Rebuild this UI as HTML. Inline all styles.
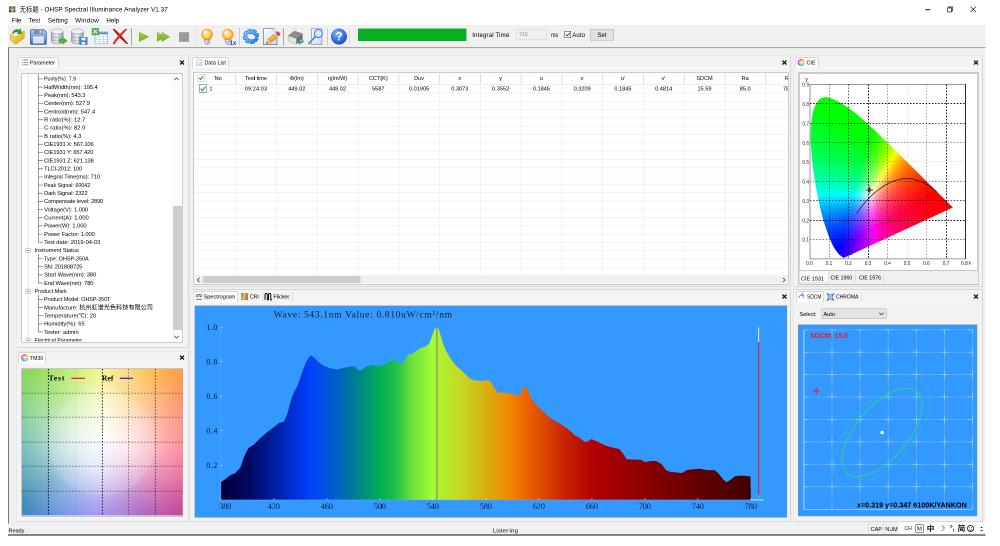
<!DOCTYPE html>
<html lang="en"><head><meta charset="utf-8"><title>OHSP Spectral Illuminance Analyzer V1.37</title>
<style>
html,body{margin:0;padding:0;background:#fff;overflow:hidden}
body{width:1000px;height:546px;position:relative}
#root{position:absolute;left:0;top:0;width:2000px;height:1092px;transform:scale(.5);transform-origin:0 0;will-change:transform;
font-family:"Liberation Sans","Noto Sans CJK SC",sans-serif;overflow:hidden}
#root div,#root span.t,#root svg{position:absolute;box-sizing:border-box}
#root svg{overflow:visible}
span.t{white-space:nowrap}
.mono{font-family:"Liberation Mono","Noto Sans CJK SC",monospace}
.serif{font-family:"Liberation Serif","Noto Serif CJK SC",serif}
.b{font-weight:bold}
</style></head>
<body><div id="root">
<div style="left:16.4px;top:0px;width:1954.8px;height:1070.4px;background:#fff"></div>
<div style="left:16.4px;top:50.8px;width:1954.8px;height:1019.6px;background:#f0f0f0"></div>
<svg style="left:18px;top:12px" width="14" height="14" viewBox="0 0 7 7" >
<rect x="0" y="0.3" width="2" height="2.6" fill="#c33"/><rect x="2.2" y="0.3" width="2" height="2.6" fill="#3a3"/><rect x="4.4" y="0.3" width="2" height="2.6" fill="#36c"/><rect x="0" y="3.4" width="2" height="3" fill="#444"/><rect x="2.2" y="3.4" width="2" height="3" fill="#d90"/><rect x="4.4" y="3.4" width="2" height="3" fill="#555"/></svg>
<span id="t0" class="t" style="top:12.24px;font-size:12.6px;line-height:15.12px;color:#000;left:39.2px;letter-spacing:0.15px;">无标题 - OHSP Spectral Illuminance Analyzer V1.37</span>
<svg style="left:1840px;top:7.2px" width="124" height="22" viewBox="0 0 62 11" >
<path d="M5.2 6.2h5.2" stroke="#000" stroke-width="0.9" fill="none"/><path d="M27.6 4.4h4v4h-4z M28.6 4.4v-1h4v4h-1" stroke="#000" stroke-width="0.6" fill="none"/><path d="M50.6 3.1l5.4 5.4M56 3.1l-5.4 5.4" stroke="#000" stroke-width="0.6" fill="none"/></svg>
<span id="t1" class="t" style="top:33.84px;font-size:12.6px;line-height:15.12px;color:#000;left:23.2px;letter-spacing:-0.22px;">File</span>
<span id="t2" class="t" style="top:33.84px;font-size:12.6px;line-height:15.12px;color:#000;left:57px;letter-spacing:0.02px;">Test</span>
<span id="t3" class="t" style="top:33.84px;font-size:12.6px;line-height:15.12px;color:#000;left:95.6px;letter-spacing:0.11px;">Setting</span>
<span id="t4" class="t" style="top:33.84px;font-size:12.6px;line-height:15.12px;color:#000;left:150.2px;letter-spacing:0.53px;">Window</span>
<span id="t5" class="t" style="top:33.84px;font-size:12.6px;line-height:15.12px;color:#000;left:212.8px;letter-spacing:-0.13px;">Help</span>
<div style="left:16.4px;top:93.6px;width:1954.8px;height:2.4px;background:#a6a6a6"></div>
<div style="left:16.4px;top:96px;width:1954.8px;height:1.2px;background:#e4e4e4"></div>
<div style="left:16.4px;top:95px;width:1.6px;height:952px;background:#7a7a7a"></div>
<div style="left:16.4px;top:50.8px;width:1954.8px;height:1.2px;background:#e2e2e2"></div>
<div style="left:262.2px;top:56.4px;width:1.6px;height:34.8px;background:#a8a8a8"></div>
<div style="left:390.6px;top:56.4px;width:1.6px;height:34.8px;background:#dedede"></div>
<div style="left:477.8px;top:56.4px;width:1.6px;height:34.8px;background:#a8a8a8"></div>
<div style="left:566px;top:56.4px;width:1.6px;height:34.8px;background:#a8a8a8"></div>
<div style="left:653.8px;top:56.4px;width:1.6px;height:34.8px;background:#a8a8a8"></div>
<div style="left:698.4px;top:56.4px;width:1.6px;height:34.8px;background:#dcdcdc"></div>
<svg style="left:0px;top:48px" width="720" height="48" viewBox="0 0 360 24" >
<defs><linearGradient id="gFold" x1="0" y1="0" x2="1" y2="1"><stop offset="0" stop-color="#ffe873"/><stop offset="1" stop-color="#d9a400"/></linearGradient><linearGradient id="gFlop" x1="0" y1="0" x2="0" y2="1"><stop offset="0" stop-color="#a9c8f4"/><stop offset=".6" stop-color="#6a98e4"/><stop offset="1" stop-color="#3a66cc"/></linearGradient><linearGradient id="gDb" x1="0" y1="0" x2="1" y2="0"><stop offset="0" stop-color="#aab4ba"/><stop offset=".45" stop-color="#e9eef0"/><stop offset="1" stop-color="#8e9aa2"/></linearGradient><radialGradient id="gBulb" cx=".45" cy=".45" r=".6"><stop offset="0" stop-color="#fff0c0"/><stop offset=".5" stop-color="#ffd06a"/><stop offset=".85" stop-color="#ff9c14"/><stop offset="1" stop-color="#f48600"/></radialGradient><radialGradient id="gHelp" cx=".4" cy=".3" r=".8"><stop offset="0" stop-color="#8fbcff"/><stop offset=".5" stop-color="#3a7be8"/><stop offset="1" stop-color="#1444b8"/></radialGradient><linearGradient id="gPlay" x1="0" y1="0" x2="0" y2="1"><stop offset="0" stop-color="#a8d64a"/><stop offset="1" stop-color="#6fa51e"/></linearGradient><linearGradient id="gGear" x1="0" y1="0" x2="1" y2="1"><stop offset="0" stop-color="#8ed2ff"/><stop offset=".55" stop-color="#4aa0f8"/><stop offset="1" stop-color="#1c6ce0"/></linearGradient><linearGradient id="gDoc" x1="0" y1="0" x2="1" y2="1"><stop offset="0" stop-color="#ffffff"/><stop offset="1" stop-color="#c9d9f0"/></linearGradient></defs>
<path d="M10.6 10.2l5 3.2 8.6-6.6v7.2l-8.4 6.4-5.2-4.2z" fill="url(#gFold)" stroke="#b8890a" stroke-width=".5"/><path d="M12.3 9.2c1-3.4 4.6-4.6 7.2-3.2l.9-1.4 1.6 4.9-5 .2 1-1.5c-1.700-.8-3.600-.3-4.400 1.600z" fill="#2e9e2e" stroke="#1d7a1d" stroke-width=".3"/>
<path d="M31.4 5.600h12.400l2.600 2.400v11.400a1 1 0 0 1-1 1h-14a1 1 0 0 1-1-1v-12.800a1 1 0 0 1 1-1z" fill="url(#gFlop)" stroke="#2a4fa8" stroke-width=".6"/><rect x="34.200" y="5.400" width="8.200" height="4.600" fill="#8c8c8c"/><rect x="39.600" y="6" width="1.600" height="3.400" fill="#d8d8d8"/><rect x="33" y="12.400" width="10.800" height="7" fill="#e6effb" stroke="#9db8e4" stroke-width=".4"/><path d="M34 15h8.800M34 17.200h8.800" stroke="#b4c8ea" stroke-width=".6"/>
<g transform="translate(51.2 0)"><path d="M0 7.400v9.800c0 1.700 2.700 2.700 6 2.700s6-1 6-2.700v-9.800z" fill="url(#gDb)" stroke="#7f8b92" stroke-width=".5"/><ellipse cx="6" cy="7.400" rx="6" ry="2.500" fill="#eef2f4" stroke="#8b979e" stroke-width=".5"/><path d="M0 10.800c0 1.700 2.700 2.700 6 2.700s6-1 6-2.700M0 14.200c0 1.700 2.700 2.700 6 2.700s6-1 6-2.700" fill="none" stroke="#8b979e" stroke-width=".5"/></g>
<g transform="translate(71.4 0)"><path d="M0 7.400v9.800c0 1.700 2.700 2.700 6 2.700s6-1 6-2.700v-9.800z" fill="url(#gDb)" stroke="#7f8b92" stroke-width=".5"/><ellipse cx="6" cy="7.400" rx="6" ry="2.500" fill="#eef2f4" stroke="#8b979e" stroke-width=".5"/><path d="M0 10.800c0 1.700 2.700 2.700 6 2.700s6-1 6-2.700M0 14.200c0 1.700 2.700 2.700 6 2.700s6-1 6-2.700" fill="none" stroke="#8b979e" stroke-width=".5"/></g>
<path d="M59 15.200h3.800v-1.900l4.400 3.500-4.400 3.500v-1.900h-3.800z" fill="#58b428" stroke="#3a8a14" stroke-width=".4"/>
<rect x="79.600" y="13.400" width="7.600" height="7.200" fill="#3d84d8" stroke="#2460b0" stroke-width=".4"/><rect x="81.200" y="13.600" width="4.400" height="2.800" fill="#e8f0fa"/><rect x="81.600" y="18" width="3.600" height="2.600" fill="#e8f0fa"/>
<rect x="95" y="8" width="12.600" height="11.800" fill="#fff" stroke="#6aa2d8" stroke-width=".6"/><rect x="95" y="8" width="12.600" height="2.400" fill="#5a9ad8"/><path d="M98.600 8.200h1.400M102 8.200h1.400M105 8.200h1.400" stroke="#f2c12e" stroke-width=".8"/><path d="M95 13h12.600M95 15.300h12.600M95 17.600h12.600M99.200 10.400v9.400M103.400 10.400v9.400" stroke="#a8c8ea" stroke-width=".5"/><rect x="92" y="4.200" width="6.600" height="6.800" fill="#55a655" stroke="#3a8a3a" stroke-width=".3"/><path d="M93.400 5.600l3.800 4M97.200 5.600l-3.800 4" stroke="#fff" stroke-width=".9"/>
<path d="M112.800 5.300c.6-.5 1.300-.5 1.900 0 4.600 4 9.400 9 13 14.200-.2.500-.6.700-1.100.500-4.300-3.400-9.700-9-13.800-14.700z" fill="#a81616"/><path d="M127.200 5.600c-.4-.7-1.400-.8-2.100-.3-4.800 3.600-9.200 8.600-12.300 14.100.2.800.9 1.100 1.600.8 3.400-4.900 8-9.900 12.800-14.600z" fill="#d32222"/><path d="M125.600 6.200c-4.200 3.400-8.200 7.600-11.200 12.200" stroke="#ee5a50" stroke-width=".6" fill="none"/>
<path d="M139.200 8.200l9.800 4.600-9.800 4.800z" fill="url(#gPlay)" stroke="#7fb52a" stroke-width=".5"/>
<path d="M157.200 8.200l7.400 4.600-7.400 4.800z" fill="url(#gPlay)" stroke="#7fb52a" stroke-width=".5"/><path d="M161.800 8.200l8 4.600-8 4.800z" fill="url(#gPlay)" stroke="#7fb52a" stroke-width=".5"/>
<rect x="179" y="8.200" width="10.100" height="9.600" fill="#9b9b9b"/>
<g transform="translate(207.1 .6)"><path d="M-2.600 14.400h5.200v3.100l-1.600 2.300h-2l-1.600-2.300z" fill="#a9c8e0" stroke="#5f86a8" stroke-width=".5"/><path d="M-.9 15v3.600" stroke="#e4f0fa" stroke-width=".9"/><path d="M0 4.500a5.500 5.500 0 0 1 5.500 5.500c0 2.300-1.700 3.500-2.600 5.100h-5.800c-.9-1.600-2.600-2.800-2.600-5.100a5.500 5.500 0 0 1 5.500-5.500z" fill="url(#gBulb)" stroke="#f08a0c" stroke-width=".4"/><ellipse cx="-1.800" cy="7.600" rx="1.300" ry="1.800" transform="rotate(25 -1.800 7.600)" fill="#fff" fill-opacity=".75"/></g>
<g transform="translate(227.8 .6)"><path d="M-2.600 14.400h5.200v3.100l-1.600 2.300h-2l-1.600-2.300z" fill="#a9c8e0" stroke="#5f86a8" stroke-width=".5"/><path d="M-.9 15v3.600" stroke="#e4f0fa" stroke-width=".9"/><path d="M0 4.500a5.500 5.500 0 0 1 5.500 5.500c0 2.300-1.700 3.500-2.600 5.100h-5.800c-.9-1.600-2.600-2.800-2.600-5.100a5.500 5.500 0 0 1 5.500-5.500z" fill="url(#gBulb)" stroke="#f08a0c" stroke-width=".4"/><ellipse cx="-1.800" cy="7.600" rx="1.300" ry="1.800" transform="rotate(25 -1.800 7.600)" fill="#fff" fill-opacity=".75"/></g>
<g transform="translate(250.900 12.450) rotate(-12) scale(1 .96)"><path d="M5.48 -2.19L7.7 -1.76L7.7 1.76L5.48 2.19L5.42 2.33L6.69 4.2L4.2 6.69L2.33 5.42L2.19 5.48L1.76 7.7L-1.76 7.7L-2.19 5.48L-2.33 5.42L-4.2 6.69L-6.69 4.2L-5.42 2.33L-5.48 2.19L-7.7 1.76L-7.7 -1.76L-5.48 -2.19L-5.42 -2.33L-6.69 -4.2L-4.2 -6.69L-2.33 -5.42L-2.19 -5.48L-1.76 -7.7L1.76 -7.7L2.19 -5.48L2.33 -5.42L4.2 -6.69L6.69 -4.2L5.42 -2.33Z" fill="url(#gGear)" stroke="#1c6ad8" stroke-width=".5" stroke-linejoin="round"/><ellipse cx=".2" cy=".1" rx="4.300" ry="3" transform="rotate(30)" fill="#eef0f4" stroke="#2a78e4" stroke-width=".6"/></g>
<path d="M263.500 4.700h10.300l3.200 3.200v12.700h-13.500z" fill="url(#gDoc)" stroke="#5f76a6" stroke-width=".7"/><path d="M273.800 4.700v3.200h3.200" fill="#fff" stroke="#7f93b8" stroke-width=".4"/><g transform="translate(266.200 19.500) rotate(-39)"><path d="M0 0l3.400-2.200h8.800v4.400h-8.800z" fill="#f5a21c" stroke="#b4690a" stroke-width=".35"/><path d="M3.400-.7h8.800" stroke="#ffd070" stroke-width=".9"/><path d="M0 0l3.400-2.200v4.400z" fill="#ecd6a8"/><path d="M0 0l1.600-1v2z" fill="#333"/><rect x="12.200" y="-2.200" width="1.700" height="4.400" fill="#c9ccd2"/><path d="M13.900-2.200h1.700a1.400 1.400 0 0 1 1.400 1.400v1.600a1.400 1.400 0 0 1-1.400 1.400h-1.700z" fill="#de3c58"/></g>
<path d="M291.200 8.600l3.800-4.200 1.600.7-2.400 4z" fill="#f2f6ff" stroke="#9aabbf" stroke-width=".3"/><path d="M288.200 11.800l6.400-4.600 8 2.500-6.200 4.900z" fill="#8e8e8e"/><path d="M288.200 11.800l8.200 2.800v5.700l-8.200-3.300z" fill="#e6e6e6" stroke="#8a8a8a" stroke-width=".35"/><path d="M296.400 14.600l6.200-4.900v5.500l-6.200 5.100z" fill="#6e6e6e"/><path d="M288.200 11.800l6.400-4.600 8 2.500" fill="none" stroke="#666" stroke-width=".4"/><path d="M297.400 17.600l4.800-2.600 1.800 2.800-4.600 2.900z" fill="#4a8ae0"/><path d="M296.800 17l2-1 1.200 1.800-2 1z" fill="#30a030"/><path d="M299.800 16.600l1.600-.8.800 1.200-1.600.8z" fill="#f0d030"/>
<path d="M311.400 4.800h10.600v15.600h-10.600z" fill="url(#gDoc)" stroke="#6f86b4" stroke-width=".6"/><circle cx="318.400" cy="9.600" r="4" fill="#dbe8fa" fill-opacity=".8" stroke="#4a86d8" stroke-width="1.100"/><path d="M315.400 12.600l-6.600 7" stroke="#4a86d8" stroke-width="1.600" stroke-linecap="round"/>
<circle cx="339" cy="12.600" r="7.800" fill="url(#gHelp)" stroke="#1a48b0" stroke-width=".4"/>
</svg>
<span id="t6" class="t b" style="top:59.8px;font-size:23px;line-height:27.6px;color:#fff;left:678.2px;transform:translateX(-50%);">?</span>
<span id="t7" class="t b" style="top:78.28px;font-size:13.2px;line-height:15.84px;color:#2a2ac8;left:466.4px;transform:translateX(-50%) scaleX(0.8724);">1x</span>
<div style="left:714.8px;top:55.8px;width:219.6px;height:27.8px;background:#e6e6e6;border:1px solid #fbfbfb"></div>
<div style="left:716.2px;top:57.2px;width:216.8px;height:25px;background:#06b025"></div>
<span id="t8" class="t" style="top:63px;font-size:12px;line-height:14.4px;color:#000;left:944.4px;letter-spacing:0.39px;">Integral Time</span>
<div style="left:1032.4px;top:58.6px;width:60.4px;height:20.6px;background:#f0f0f0;border:1px solid #d0d0d0"></div>
<span id="t9" class="t" style="top:62.28px;font-size:11.2px;line-height:13.44px;color:#8a8a8a;left:1038.4px;transform-origin:0 50%;transform:scaleX(0.9212);">710</span>
<span id="t10" class="t" style="top:63.2px;font-size:12px;line-height:14.4px;color:#000;left:1102px;transform-origin:0 50%;transform:scaleX(0.9125);">ms</span>
<div style="left:1129.2px;top:62.4px;width:13.2px;height:13.2px;background:#fff;border:1px solid #333"></div>
<svg style="left:1129.2px;top:62.4px" width="13.2" height="13.2" viewBox="0 0 6.6 6.6" >
<path d="M1.400 3.400l1.400 1.500 2.600-3.200" stroke="#222" stroke-width=".8" fill="none"/></svg>
<span id="t11" class="t" style="top:63px;font-size:12px;line-height:14.4px;color:#000;left:1144.4px;letter-spacing:0.33px;">Auto</span>
<div style="left:1180px;top:57.6px;width:47.6px;height:23.4px;background:#e1e1e1;border:1px solid #adadad"></div>
<span id="t12" class="t" style="top:62.6px;font-size:12px;line-height:14.4px;color:#000;left:1203.8px;transform:translateX(-50%);">Set</span>
<span id="t13" class="t" style="top:1053.52px;font-size:11.8px;line-height:14.16px;color:#000;left:17.2px;transform-origin:0 50%;transform:scaleX(0.9264);">Ready</span>
<span id="t14" class="t" style="top:1053.92px;font-size:11.8px;line-height:14.16px;color:#000;left:986px;letter-spacing:0.31px;">Listening</span>
<div style="left:16.4px;top:1069px;width:1954.8px;height:2.2px;background:#111"></div>
<div style="left:1736.8px;top:1045.2px;width:1px;height:20.8px;background:#d2d2d2"></div>
<div style="left:1766.8px;top:1045.2px;width:1px;height:20.8px;background:#d2d2d2"></div>
<span id="t15" class="t" style="top:1051.52px;font-size:10.8px;line-height:12.96px;color:#000;left:1741.2px;letter-spacing:0.2px;">CAP</span>
<span id="t16" class="t" style="top:1051.52px;font-size:10.8px;line-height:12.96px;color:#000;left:1770.8px;letter-spacing:-0.06px;">NUM</span>
<div style="left:1797.2px;top:1043.6px;width:174px;height:25.4px;background:#fff"></div>
<span id="t17" class="t" style="top:1050.96px;font-size:10.4px;line-height:12.48px;color:#222;left:1808.8px;transform-origin:0 50%;transform:scaleX(0.9590);">CH</span>
<div style="left:1830.8px;top:1049.2px;width:16px;height:16px;border:1px solid #222;background:#fff"></div>
<span id="t18" class="t serif" style="top:1049.96px;font-size:12.4px;line-height:14.88px;color:#111;left:1838.8px;transform:translateX(-50%);">M</span>
<span id="t19" class="t b" style="top:1048.08px;font-size:15.2px;line-height:18.24px;color:#111;left:1861.2px;transform:translateX(-50%);">中</span>
<span id="t20" class="t" style="top:1047.68px;font-size:15.2px;line-height:18.24px;color:#111;left:1883.2px;transform:translateX(-50%);">☽</span>
<span id="t21" class="t b" style="top:1047.6px;font-size:14px;line-height:16.8px;color:#111;left:1904.4px;transform:translateX(-50%);">°,</span>
<span id="t22" class="t b" style="top:1048.08px;font-size:15.2px;line-height:18.24px;color:#111;left:1922.8px;transform:translateX(-50%);">简</span>
<svg style="left:1933.2px;top:1049.2px" width="16" height="16" viewBox="0 0 8 8" >
<circle cx="4" cy="4" r="3.100" fill="none" stroke="#111" stroke-width=".8"/><circle cx="2.900" cy="3.200" r=".5" fill="#111"/><circle cx="5.100" cy="3.200" r=".5" fill="#111"/><path d="M2.400 5c.9 1 2.300 1 3.200 0" stroke="#111" stroke-width=".6" fill="none"/></svg>
<svg style="left:1959.2px;top:1050px" width="8" height="16" viewBox="0 0 4 8" >
<path d="M.8 3h2.400L2 1.600zM.8 5h2.400L2 6.400z" fill="#111"/></svg>
<div style="left:33px;top:111.4px;width:343.6px;height:585px;background:#f3f3f3;border:1.6px solid #e0e0e0;border-right-color:#bdbdbd;border-bottom-color:#bdbdbd"></div>
<div style="left:34.2px;top:134px;width:341.2px;height:1.8px;background:#fdfdfd"></div>
<div style="left:37px;top:115.2px;width:80px;height:20.8px;background:#fdfdfd;border:1.8px solid #bcbcbc;border-bottom:none;border-radius:2.4px 2.4px 0 0"></div>
<svg style="left:357.6px;top:119px" width="12" height="12" viewBox="0 0 6 6" >
<path d="M1 1.100l4 3.900M5 1.100l-4 3.900" stroke="#111" stroke-width="1.250" fill="none"/></svg>
<svg style="left:43.2px;top:118.4px" width="14" height="14" viewBox="0 0 7 7" >
<path d="M.2 1h1M.2 3.400h1M.2 5.800h1" stroke="#4a90e0" stroke-width="1"/><path d="M2 1h4.600M2 3.400h4.600M2 5.800h4.600" stroke="#888" stroke-width=".9"/></svg>
<span id="t23" class="t" style="top:118.24px;font-size:11.6px;line-height:13.92px;color:#000;left:60.4px;transform-origin:0 50%;transform:scaleX(0.9201);">Parameter</span>
<div style="left:43px;top:146.8px;width:322.4px;height:538px;background:#fff;border:1.4px solid #9a9a9a;border-right-color:#a6a6a6;border-bottom-color:#a0a0a0"></div>
<div style="left:44.4px;top:148.2px;width:297px;height:535.2px;overflow:hidden">
<svg style="left:0px;top:0px" width="300" height="536" viewBox="0 0 150 268" >
<path d="M6.2 0V266.18" stroke="#b8b8b8" stroke-width=".7" stroke-dasharray=".6 .6"/><rect x="4" y="174.18" width="4.400" height="4.400" fill="#fff" stroke="#9a9a9a" stroke-width=".5"/><path d="M5 176.38h2.400" stroke="#333" stroke-width=".6"/><rect x="4" y="215" width="4.400" height="4.400" fill="#fff" stroke="#9a9a9a" stroke-width=".5"/><path d="M5 217.2h2.400" stroke="#333" stroke-width=".6"/><rect x="4" y="263.98" width="4.400" height="4.400" fill="#fff" stroke="#9a9a9a" stroke-width=".5"/><path d="M5 266.18h2.400" stroke="#333" stroke-width=".6"/><path d="M16.3 4.96h4.600M16.3 13.12h4.600M16.3 21.29h4.600M16.3 29.45h4.600M16.3 37.61h4.600M16.3 45.78h4.600M16.3 53.94h4.600M16.3 62.1h4.600M16.3 70.26h4.600M16.3 78.43h4.600M16.3 86.59h4.600M16.3 94.75h4.600M16.3 102.92h4.600M16.3 111.08h4.600M16.3 119.24h4.600M16.3 127.41h4.600M16.3 135.57h4.600M16.3 143.73h4.600M16.3 151.89h4.600M16.3 160.06h4.600M16.3 168.22h4.600M16.3 0V168.22M16.3 184.55h4.600M16.3 192.71h4.600M16.3 200.87h4.600M16.3 209.03h4.600M16.3 179.88V209.03M16.3 225.36h4.600M16.3 233.52h4.600M16.3 241.69h4.600M16.3 249.85h4.600M16.3 258.01h4.600M16.3 220.7V258.01" stroke="#6e6e6e" stroke-width=".7" fill="none"/></svg>
<span id="t24" class="t tr" style="top:3.22px;font-size:11.5px;line-height:13.8px;color:#000;left:43.8px;transform-origin:0 50%;transform:scaleX(0.9215);">Purity(%): 7.9</span>
<span id="t25" class="t tr" style="top:19.55px;font-size:11.5px;line-height:13.8px;color:#000;left:43.8px;letter-spacing:-0.07px;">HalfWidth(nm): 195.4</span>
<span id="t26" class="t tr" style="top:35.87px;font-size:11.5px;line-height:13.8px;color:#000;left:43.8px;letter-spacing:-0.16px;">Peak(nm): 543.3</span>
<span id="t27" class="t tr" style="top:52.2px;font-size:11.5px;line-height:13.8px;color:#000;left:43.8px;letter-spacing:-0.09px;">Center(nm): 527.9</span>
<span id="t28" class="t tr" style="top:68.52px;font-size:11.5px;line-height:13.8px;color:#000;left:43.8px;letter-spacing:-0.01px;">Centroid(nm): 547.4</span>
<span id="t29" class="t tr" style="top:84.85px;font-size:11.5px;line-height:13.8px;color:#000;left:43.8px;letter-spacing:0.13px;">R ratio(%): 12.7</span>
<span id="t30" class="t tr" style="top:101.18px;font-size:11.5px;line-height:13.8px;color:#000;left:43.8px;letter-spacing:0.09px;">G ratio(%): 82.9</span>
<span id="t31" class="t tr" style="top:117.5px;font-size:11.5px;line-height:13.8px;color:#000;left:43.8px;letter-spacing:0.09px;">B ratio(%): 4.3</span>
<span id="t32" class="t tr" style="top:133.83px;font-size:11.5px;line-height:13.8px;color:#000;left:43.8px;letter-spacing:-0.26px;">CIE1931 X: 567.106</span>
<span id="t33" class="t tr" style="top:150.15px;font-size:11.5px;line-height:13.8px;color:#000;left:43.8px;letter-spacing:-0.24px;">CIE1931 Y: 657.420</span>
<span id="t34" class="t tr" style="top:166.48px;font-size:11.5px;line-height:13.8px;color:#000;left:43.8px;letter-spacing:-0.22px;">CIE1931 Z: 621.138</span>
<span id="t35" class="t tr" style="top:182.81px;font-size:11.5px;line-height:13.8px;color:#000;left:43.8px;letter-spacing:-0.29px;">TLCI-2012: 100</span>
<span id="t36" class="t tr" style="top:199.13px;font-size:11.5px;line-height:13.8px;color:#000;left:43.8px;letter-spacing:-0.15px;">Integral Time(ms): 710</span>
<span id="t37" class="t tr" style="top:215.46px;font-size:11.5px;line-height:13.8px;color:#000;left:43.8px;transform-origin:0 50%;transform:scaleX(0.9263);">Peak Signal: 60042</span>
<span id="t38" class="t tr" style="top:231.78px;font-size:11.5px;line-height:13.8px;color:#000;left:43.8px;letter-spacing:-0.27px;">Dark Signal: 2322</span>
<span id="t39" class="t tr" style="top:248.11px;font-size:11.5px;line-height:13.8px;color:#000;left:43.8px;letter-spacing:-0.26px;">Compensate level: 2890</span>
<span id="t40" class="t tr" style="top:264.44px;font-size:11.5px;line-height:13.8px;color:#000;left:43.8px;letter-spacing:-0.05px;">Voltage(V): 1.000</span>
<span id="t41" class="t tr" style="top:280.76px;font-size:11.5px;line-height:13.8px;color:#000;left:43.8px;letter-spacing:0.02px;">Current(A): 1.000</span>
<span id="t42" class="t tr" style="top:297.09px;font-size:11.5px;line-height:13.8px;color:#000;left:43.8px;letter-spacing:-0.09px;">Power(W): 1.000</span>
<span id="t43" class="t tr" style="top:313.41px;font-size:11.5px;line-height:13.8px;color:#000;left:43.8px;letter-spacing:-0.11px;">Power Factor: 1.000</span>
<span id="t44" class="t tr" style="top:329.74px;font-size:11.5px;line-height:13.8px;color:#000;left:43.8px;letter-spacing:0.03px;">Test date: 2019-04-03</span>
<span id="t45" class="t tr" style="top:346.07px;font-size:11.5px;line-height:13.8px;color:#000;left:24.8px;letter-spacing:-0.12px;">Instrument Status</span>
<span id="t46" class="t tr" style="top:362.39px;font-size:11.5px;line-height:13.8px;color:#000;left:43.8px;transform-origin:0 50%;transform:scaleX(0.9428);">Type: OHSP-350A</span>
<span id="t47" class="t tr" style="top:378.72px;font-size:11.5px;line-height:13.8px;color:#000;left:43.8px;letter-spacing:-0.29px;">SN: 201808725</span>
<span id="t48" class="t tr" style="top:395.04px;font-size:11.5px;line-height:13.8px;color:#000;left:43.8px;letter-spacing:-0.07px;">Start Wave(nm): 380</span>
<span id="t49" class="t tr" style="top:411.37px;font-size:11.5px;line-height:13.8px;color:#000;left:43.8px;letter-spacing:-0.19px;">End Wave(nm): 780</span>
<span id="t50" class="t tr" style="top:427.7px;font-size:11.5px;line-height:13.8px;color:#000;left:24.8px;transform-origin:0 50%;transform:scaleX(0.9446);">Product Mark</span>
<span id="t51" class="t tr" style="top:444.02px;font-size:11.5px;line-height:13.8px;color:#000;left:43.8px;transform-origin:0 50%;transform:scaleX(0.9262);">Product Model: OHSP-350T</span>
<span id="t52" class="t tr" style="top:460.35px;font-size:11.5px;line-height:13.8px;color:#000;left:43.8px;letter-spacing:-0.01px;">Manufacture: <span style="font-size:12.3px">杭州虹谱光色科技有限公司</span></span>
<span id="t53" class="t tr" style="top:476.67px;font-size:11.5px;line-height:13.8px;color:#000;left:43.8px;letter-spacing:0.08px;">Temperature(℃): 20</span>
<span id="t54" class="t tr" style="top:493px;font-size:11.5px;line-height:13.8px;color:#000;left:43.8px;letter-spacing:-0.05px;">Humidity(%): 65</span>
<span id="t55" class="t tr" style="top:509.33px;font-size:11.5px;line-height:13.8px;color:#000;left:43.8px;letter-spacing:0.01px;">Tester: admin</span>
<span id="t56" class="t tr" style="top:525.65px;font-size:11.5px;line-height:13.8px;color:#000;left:24.8px;transform-origin:0 50%;transform:scaleX(0.9175);">Electrical Parameter</span>
</div>
<div style="left:342.4px;top:148.2px;width:21.6px;height:535.2px;background:#fbfbfb"></div>
<div style="left:345.8px;top:412.4px;width:18.2px;height:247.6px;background:#cdcdcd"></div>
<svg style="left:346.8px;top:153.2px" width="12" height="10" viewBox="0 0 6 5" >
<path d="M.8 3.700l2.200-2.400 2.200 2.400" stroke="#555" stroke-width=".8" fill="none"/></svg>
<svg style="left:346.8px;top:668.8px" width="12" height="10" viewBox="0 0 6 5" >
<path d="M.8 1.300l2.200 2.400 2.200-2.400" stroke="#555" stroke-width=".8" fill="none"/></svg>
<div style="left:33px;top:702px;width:343.6px;height:342.4px;background:#f3f3f3;border:1.6px solid #e0e0e0;border-right-color:#bdbdbd;border-bottom-color:#bdbdbd"></div>
<div style="left:34.2px;top:724.6px;width:341.2px;height:1.8px;background:#fdfdfd"></div>
<div style="left:37px;top:704.8px;width:54.2px;height:22px;background:#fdfdfd;border:1.8px solid #bcbcbc;border-bottom:none;border-radius:2.4px 2.4px 0 0"></div>
<svg style="left:357.6px;top:709.2px" width="12" height="12" viewBox="0 0 6 6" >
<path d="M1 1.100l4 3.900M5 1.100l-4 3.900" stroke="#111" stroke-width="1.250" fill="none"/></svg>
<div style="left:41.8px;top:707.8px;width:14.8px;height:14.8px;border-radius:50%;background:radial-gradient(circle,#fff 0,rgba(255,255,255,0) 70%),conic-gradient(#ff4040,#ffb020,#e8e820,#40d040,#20d0d0,#4060ff,#c040ff,#ff40a0,#ff4040)"></div>
<span id="t57" class="t" style="top:708.64px;font-size:11.6px;line-height:13.92px;color:#000;left:60px;transform-origin:0 50%;transform:scaleX(0.8907);">TM30</span>
<div style="left:42.8px;top:736.8px;width:323.6px;height:296px;background:#fff;border:1.4px solid #9a9a9a;border-right-color:#a6a6a6;border-bottom-color:#a0a0a0"></div>
<div style="left:44.2px;top:738.4px;width:320.6px;height:292.6px;background:radial-gradient(circle 107px at 50% 50%,rgba(255,255,255,.13) 0,rgba(255,255,255,.13) 99%,rgba(255,255,255,0) 100%),radial-gradient(ellipse 66% 66% at 50% 50%,rgba(255,255,255,1) 0,rgba(255,255,255,.80) 28%,rgba(255,255,255,.36) 62%,rgba(255,255,255,0) 100%),conic-gradient(from 0deg at 50% 50%,#f6f070 0deg,#ffb040 38deg,#ff8a58 62deg,#ff6f80 95deg,#d04c98 128deg,#a050b8 150deg,#8878ee 185deg,#5088d8 215deg,#3c8cb4 235deg,#58b0a0 268deg,#78cc78 295deg,#90dc54 318deg,#c4ec60 342deg,#f6f070 360deg)"></div>
<svg style="left:44.2px;top:738.4px" width="320.6" height="292.6" viewBox="0 0 160.3 146.3" >
<path d="M26.4 0V146.3" stroke="#000" stroke-opacity=".9" stroke-width="1" stroke-dasharray="1.560 1.565"/><path d="M53.4 0V146.3" stroke="#000" stroke-opacity=".1" stroke-width="1" stroke-dasharray="1.560 1.565"/><path d="M80.4 0V146.3" stroke="#000" stroke-opacity=".85" stroke-width="1" stroke-dasharray="1.560 1.565"/><path d="M106.4 0V146.3" stroke="#000" stroke-opacity=".45" stroke-width="1" stroke-dasharray="1.560 1.565"/><path d="M133.4 0V146.3" stroke="#000" stroke-opacity=".6" stroke-width="1" stroke-dasharray="1.560 1.565"/><path d="M0 24.3H160.3" stroke="#000" stroke-opacity=".4" stroke-width="1" stroke-dasharray="1.560 1.565"/><path d="M0 48.3H160.3" stroke="#000" stroke-opacity=".4" stroke-width="1" stroke-dasharray="1.560 1.565"/><path d="M0 73.3H160.3" stroke="#000" stroke-opacity=".4" stroke-width="1" stroke-dasharray="1.560 1.565"/><path d="M0 97.3H160.3" stroke="#000" stroke-opacity=".4" stroke-width="1" stroke-dasharray="1.560 1.565"/><path d="M0 122.3H160.3" stroke="#000" stroke-opacity=".4" stroke-width="1" stroke-dasharray="1.560 1.565"/><path d="M49.3 9.3H62.9" stroke="#ff2410" stroke-width="1.300"/><path d="M97.9 9.3H110.9" stroke="#2c2cf8" stroke-width="1.300"/></svg>
<span id="t58" class="t serif b" style="top:746.68px;font-size:15.2px;line-height:18.24px;color:#000;left:97.2px;letter-spacing:1.69px;">Test</span>
<span id="t59" class="t serif b" style="top:746.68px;font-size:15.2px;line-height:18.24px;color:#000;left:203.8px;letter-spacing:0.14px;">Ref</span>
<div style="left:381.2px;top:111.4px;width:1199.6px;height:463px;background:#f3f3f3;border:1.6px solid #e0e0e0;border-right-color:#bdbdbd;border-bottom-color:#bdbdbd"></div>
<div style="left:382.4px;top:134px;width:1197.2px;height:1.8px;background:#fdfdfd"></div>
<div style="left:385.2px;top:115.2px;width:72px;height:20.8px;background:#fdfdfd;border:1.8px solid #bcbcbc;border-bottom:none;border-radius:2.4px 2.4px 0 0"></div>
<svg style="left:1563.2px;top:119px" width="12" height="12" viewBox="0 0 6 6" >
<path d="M1 1.100l4 3.900M5 1.100l-4 3.900" stroke="#111" stroke-width="1.250" fill="none"/></svg>
<div style="left:392.4px;top:118.6px;width:12.8px;height:13.2px;background:linear-gradient(135deg,#fff,#c8d4ee);border:0.8px solid #b4c0dc"></div>
<span id="t60" class="t" style="top:118.24px;font-size:11.6px;line-height:13.92px;color:#000;left:408.8px;transform-origin:0 50%;transform:scaleX(0.9352);">Data List</span>
<div style="left:387.2px;top:144px;width:1190px;height:424.8px;background:#fff;border:1.4px solid #9a9a9a;border-right-color:#a6a6a6;border-bottom-color:#a0a0a0"></div>
<div style="left:388.6px;top:145.4px;width:1187.2px;height:422px;overflow:hidden">
<div style="left:0px;top:0px;width:1187.2px;height:24.4px;background:#fff"></div>
<svg style="left:0px;top:0px" width="1187.2" height="422" viewBox="0 0 593.6 211" >
<path d="M41.3 1.200V10.8M82.07 1.200V10.8M122.84 1.200V10.8M163.61 1.200V10.8M204.38 1.200V10.8M245.15 1.200V10.8M285.92 1.200V10.8M326.69 1.200V10.8M367.46 1.200V10.8M408.23 1.200V10.8M449 1.200V10.8M489.77 1.200V10.8M530.54 1.200V10.8M571.31 1.200V10.8M612.08 1.200V10.8" stroke="#d4d4d4" stroke-width=".8" fill="none"/><path d="M41.3 12.2V202M82.07 12.2V202M122.84 12.2V202M163.61 12.2V202M204.38 12.2V202M245.15 12.2V202M285.92 12.2V202M326.69 12.2V202M367.46 12.2V202M408.23 12.2V202M449 12.2V202M489.77 12.2V202M530.54 12.2V202M571.31 12.2V202M612.08 12.2V202" stroke="#efefef" stroke-width=".7" fill="none"/><path d="M0 20.5H593.6M0 28.8H593.6M0 37.1H593.6M0 45.4H593.6M0 53.7H593.6M0 62H593.6M0 70.3H593.6M0 78.6H593.6M0 86.9H593.6M0 95.2H593.6M0 103.5H593.6M0 111.8H593.6M0 120.1H593.6M0 128.4H593.6M0 136.7H593.6M0 145H593.6M0 153.3H593.6M0 161.6H593.6M0 169.9H593.6M0 178.2H593.6M0 186.5H593.6M0 194.8H593.6M0 203.1H593.6" stroke="#efefef" stroke-width=".7" fill="none"/><path d="M0 12.2H593.6" stroke="#e6e6e6" stroke-width=".7"/></svg>
<span id="t61" class="t" style="top:4.48px;font-size:11.2px;line-height:13.44px;color:#000;left:47.8px;transform:translateX(-50%);">No</span>
<span id="t62" class="t" style="top:26.08px;font-size:11.2px;line-height:13.44px;color:#000;left:30.2px;">1</span>
<span id="t63" class="t" style="top:4.48px;font-size:11.2px;line-height:13.44px;color:#000;left:123.37px;transform:translateX(-50%);letter-spacing:-0.09px;">Test time</span>
<span id="t64" class="t" style="top:26.08px;font-size:11.2px;line-height:13.44px;color:#000;left:123.37px;transform:translateX(-50%);letter-spacing:0.15px;">09:24:03</span>
<span id="t65" class="t" style="top:4.48px;font-size:11.2px;line-height:13.44px;color:#000;left:204.91px;transform:translateX(-50%);">Φ(lm)</span>
<span id="t66" class="t" style="top:26.08px;font-size:11.2px;line-height:13.44px;color:#000;left:204.91px;transform:translateX(-50%);">449.02</span>
<span id="t67" class="t" style="top:4.48px;font-size:11.2px;line-height:13.44px;color:#000;left:286.45px;transform:translateX(-50%);">η(lm/W)</span>
<span id="t68" class="t" style="top:26.08px;font-size:11.2px;line-height:13.44px;color:#000;left:286.45px;transform:translateX(-50%);">449.02</span>
<span id="t69" class="t" style="top:4.48px;font-size:11.2px;line-height:13.44px;color:#000;left:367.99px;transform:translateX(-50%);">CCT(K)</span>
<span id="t70" class="t" style="top:26.08px;font-size:11.2px;line-height:13.44px;color:#000;left:367.99px;transform:translateX(-50%);">5587</span>
<span id="t71" class="t" style="top:4.48px;font-size:11.2px;line-height:13.44px;color:#000;left:449.53px;transform:translateX(-50%);">Duv</span>
<span id="t72" class="t" style="top:26.08px;font-size:11.2px;line-height:13.44px;color:#000;left:449.53px;transform:translateX(-50%);">0.01905</span>
<span id="t73" class="t" style="top:4.48px;font-size:11.2px;line-height:13.44px;color:#000;left:531.07px;transform:translateX(-50%);">x</span>
<span id="t74" class="t" style="top:26.08px;font-size:11.2px;line-height:13.44px;color:#000;left:531.07px;transform:translateX(-50%);">0.3073</span>
<span id="t75" class="t" style="top:4.48px;font-size:11.2px;line-height:13.44px;color:#000;left:612.61px;transform:translateX(-50%);">y</span>
<span id="t76" class="t" style="top:26.08px;font-size:11.2px;line-height:13.44px;color:#000;left:612.61px;transform:translateX(-50%);">0.3552</span>
<span id="t77" class="t" style="top:4.48px;font-size:11.2px;line-height:13.44px;color:#000;left:694.15px;transform:translateX(-50%);">u</span>
<span id="t78" class="t" style="top:26.08px;font-size:11.2px;line-height:13.44px;color:#000;left:694.15px;transform:translateX(-50%);">0.1845</span>
<span id="t79" class="t" style="top:4.48px;font-size:11.2px;line-height:13.44px;color:#000;left:775.69px;transform:translateX(-50%);">v</span>
<span id="t80" class="t" style="top:26.08px;font-size:11.2px;line-height:13.44px;color:#000;left:775.69px;transform:translateX(-50%);">0.3209</span>
<span id="t81" class="t" style="top:4.48px;font-size:11.2px;line-height:13.44px;color:#000;left:857.23px;transform:translateX(-50%);">u'</span>
<span id="t82" class="t" style="top:26.08px;font-size:11.2px;line-height:13.44px;color:#000;left:857.23px;transform:translateX(-50%);">0.1845</span>
<span id="t83" class="t" style="top:4.48px;font-size:11.2px;line-height:13.44px;color:#000;left:938.77px;transform:translateX(-50%);">v'</span>
<span id="t84" class="t" style="top:26.08px;font-size:11.2px;line-height:13.44px;color:#000;left:938.77px;transform:translateX(-50%);">0.4814</span>
<span id="t85" class="t" style="top:4.48px;font-size:11.2px;line-height:13.44px;color:#000;left:1020.31px;transform:translateX(-50%);">SDCM</span>
<span id="t86" class="t" style="top:26.08px;font-size:11.2px;line-height:13.44px;color:#000;left:1020.31px;transform:translateX(-50%);">15.59</span>
<span id="t87" class="t" style="top:4.48px;font-size:11.2px;line-height:13.44px;color:#000;left:1101.85px;transform:translateX(-50%);">Ra</span>
<span id="t88" class="t" style="top:26.08px;font-size:11.2px;line-height:13.44px;color:#000;left:1101.85px;transform:translateX(-50%);">85.0</span>
<span id="t89" class="t" style="top:4.48px;font-size:11.2px;line-height:13.44px;color:#000;left:1188.19px;transform:translateX(-50%);">R1</span>
<span id="t90" class="t" style="top:26.08px;font-size:11.2px;line-height:13.44px;color:#000;left:1188.19px;transform:translateX(-50%);">78.3</span>
<div style="left:6.8px;top:3px;width:14.8px;height:14.8px;background:#fff;border:1.2px solid #b4c0d0"></div>
<svg style="left:6.8px;top:3px" width="14.8" height="14.8" viewBox="0 0 7.4 7.4" >
<path d="M1.63 3.7l1.48 1.78 2.66 -3.4" stroke="#2a9a2a" stroke-width="1.100" fill="none"/></svg>
<div style="left:9.2px;top:23.6px;width:16.4px;height:16.4px;background:#fff;border:1.8px solid #2a5a9a"></div>
<svg style="left:9.2px;top:23.6px" width="16.4" height="16.4" viewBox="0 0 8.2 8.2" >
<path d="M1.8 4.1l1.64 1.97 2.95 -3.77" stroke="#2a9a2a" stroke-width="1.100" fill="none"/></svg>
<div style="left:0px;top:405.6px;width:1187.2px;height:16.4px;background:#f0f0f0"></div>
<div style="left:17.8px;top:407px;width:314.8px;height:13.8px;background:#cdcdcd"></div>
<svg style="left:3.8px;top:408.6px" width="10" height="12" viewBox="0 0 5 6" >
<path d="M3.600.800l-2.200 2.200 2.200 2.200" stroke="#444" stroke-width=".8" fill="none"/></svg>
<svg style="left:1174.6px;top:408.6px" width="10" height="12" viewBox="0 0 5 6" >
<path d="M1.400.800l2.200 2.200-2.200 2.200" stroke="#444" stroke-width=".8" fill="none"/></svg>
</div>
<div style="left:381.2px;top:579.2px;width:1199.6px;height:465.2px;background:#f3f3f3;border:1.6px solid #e0e0e0;border-top-color:#bcbcbc;border-right-color:#bdbdbd;border-bottom-color:#bdbdbd"></div>
<div style="left:382.4px;top:603.6px;width:1197.2px;height:1.8px;background:#fdfdfd"></div>
<div style="left:386px;top:582.6px;width:90.4px;height:22.6px;background:#fdfdfd;border:1.8px solid #bcbcbc;border-bottom:none;border-radius:2.4px 2.4px 0 0"></div>
<div style="left:523.8px;top:585px;width:1.2px;height:17px;background:#cfcfcf"></div>
<div style="left:584.2px;top:585px;width:1.2px;height:17px;background:#cfcfcf"></div>
<svg style="left:1563.2px;top:587px" width="12" height="12" viewBox="0 0 6 6" >
<path d="M1 1.100l4 3.900M5 1.100l-4 3.900" stroke="#111" stroke-width="1.250" fill="none"/></svg>
<svg style="left:390.8px;top:586.4px" width="14" height="14" viewBox="0 0 7 7" >
<path d="M.5 4c.8-3.600 5.200-3.600 6 0" stroke="#d03030" stroke-width=".9" fill="none"/><path d="M1.700 4.400c.5-2 3.100-2 3.600 0" stroke="#3060d0" stroke-width=".8" fill="none"/><path d="M.6 6.400h5.800" stroke="#30a040" stroke-width="1"/></svg>
<span id="t91" class="t" style="top:586.56px;font-size:11.4px;line-height:13.68px;color:#000;left:407.2px;letter-spacing:-0.18px;">Spectrogram</span>
<div style="left:481.6px;top:586px;width:14.4px;height:14.4px;background:linear-gradient(100deg,#6a6 0,#dc4 45%,#e83 70%,#c33 100%);border:0.6px solid #998"></div>
<span id="t92" class="t" style="top:586.56px;font-size:11.4px;line-height:13.68px;color:#000;left:500px;transform-origin:0 50%;transform:scaleX(0.8968);">CRI</span>
<svg style="left:528.8px;top:585.2px" width="16" height="16" viewBox="0 0 8 8" >
<path d="M.5 7.400V2.600c0-2.400 2.300-2.400 2.300 0v4.800M2.800 7.400c0 0 1.200 0 1.200 0M4 7.400V2.600c0-2.400 2.300-2.400 2.300 0v4.800h1.200" stroke="#000" stroke-width=".95" fill="none"/></svg>
<span id="t93" class="t" style="top:586.56px;font-size:11.4px;line-height:13.68px;color:#000;left:546.8px;letter-spacing:-0.28px;">Flicker</span>
<div style="left:388.6px;top:611.4px;width:1186.8px;height:424.4px;background:#3399ff;border:1.4px solid #9a9a9a;border-right-color:#e4e4e4;border-bottom-color:#e4e4e4"></div>
<svg style="left:390px;top:612.8px" width="1184" height="421.6" viewBox="0 0 592 210.8" >
<defs><linearGradient id="gSpec" gradientUnits="userSpaceOnUse" x1="25.9" y1="0" x2="555.9" y2="0"><stop offset="0" stop-color="#020038"/><stop offset="0.05" stop-color="#02085e"/><stop offset="0.1" stop-color="#021ea0"/><stop offset="0.15" stop-color="#0236e6"/><stop offset="0.17" stop-color="#0242fc"/><stop offset="0.2" stop-color="#0252e0"/><stop offset="0.25" stop-color="#017a98"/><stop offset="0.3" stop-color="#02ae52"/><stop offset="0.33" stop-color="#20c048"/><stop offset="0.36" stop-color="#6ee03c"/><stop offset="0.4" stop-color="#a4fc34"/><stop offset="0.42" stop-color="#b6ee2c"/><stop offset="0.46" stop-color="#cad420"/><stop offset="0.5" stop-color="#d8b010"/><stop offset="0.55" stop-color="#f48200"/><stop offset="0.57" stop-color="#ee6a00"/><stop offset="0.61" stop-color="#dc4800"/><stop offset="0.65" stop-color="#c82200"/><stop offset="0.7" stop-color="#b20200"/><stop offset="0.8" stop-color="#8c0000"/><stop offset="0.9" stop-color="#640000"/><stop offset="1" stop-color="#420000"/></linearGradient></defs><path d="M25.9 193.2L26.18 175.49L30.24 172.78L35.32 168.72L40.4 166.68L45.48 160.93L48.87 150.77L53.27 141.62L59.03 137.9L65.8 131.12L72.58 125.36L79.35 120.28L84.43 116.22L88.83 115.2L92.22 107.75L95.61 94.88L98.99 85.74L102.38 79.64L106.44 67.79L110.85 55.94L115.59 48.82L118.98 50.85L123.38 55.6L128.46 58.98L135.23 61.69L142.01 63.05L148.78 61.35L155.55 60L159.62 60L164.02 64.06L166.73 63.72L171.47 60L176.89 58.64L182.65 59.32L186.71 59.32L192.81 55.94L197.89 53.56L201.27 54.92L195 54.24L199.06 53.23L203.47 55.94L206.85 57.63L210.24 52.55L213.63 47.47L217.01 47.47L221.42 44.08L225.48 41.71L230.56 40.02L233.95 37.31L236.66 30.53L239.03 23.76L241.06 21.05L243.09 21.05L245.12 27.15L247.5 35.61L250.88 44.08L255.96 52.55L261.04 59.32L267.82 65.08L274.59 71.85L279.67 73.89L286.44 74.56L293.22 73.55L295.93 75.24L299.31 81.34L302.7 86.42L308.46 86.08L313.54 86.76L320.31 88.11L324.71 88.79L327.76 83.03L330.47 79.64L332.84 83.03L335.55 90.82L340.63 97.59L347.41 104.37L355.87 111.82L364.34 116.9L371.11 121.3L376.19 125.36L380.6 129.77L375 123.42L379.39 128.91L384.15 130.74L388.91 135.13L392.57 135.13L396.23 132.57L402.45 135.13L409.78 138.79L417.1 140.99L424.42 142.45L428.08 147.21L431.74 152.7L439.06 153.07L446.38 153.43L450.04 155.63L455.53 154.53L461.02 154.53L466.51 157.46L470.91 163.68L475.67 165.51L481.16 165.88L486.65 166.61L492.14 163.32L499.46 162.59L504.95 162.22L512.27 163.68L519.59 163.68L523.25 166.61L528.01 172.83L531.67 175.76L536.06 172.83L540.46 169.54L547.05 169.17L555.47 169.91L555.9 193.2Z" fill="url(#gSpec)"/><path d="M25.9 20.6V193.4H568.4" stroke="#b8dcff" stroke-width=".6" fill="none" stroke-opacity=".28"/><path d="M25.7 158.7h1.600M25.7 124.2h1.600M25.7 89.7h1.600M25.7 55.2h1.600M25.7 20.7h1.600M25.9 193.2v-1.500M78.9 193.2v-1.500M131.9 193.2v-1.500M184.9 193.2v-1.500M237.9 193.2v-1.500M290.9 193.2v-1.500M343.9 193.2v-1.500M396.9 193.2v-1.500M449.9 193.2v-1.500M502.9 193.2v-1.500M555.9 193.2v-1.500" stroke="#d8ecff" stroke-width=".7" fill="none"/><path d="M241.9 21V193.2" stroke="#808080" stroke-width="1.100"/><path d="M555.9 193.4H568.4" stroke="#f4f8ff" stroke-width=".8"/><path d="M563.6 20.9V35.6" stroke="#d6e8fa" stroke-width="1.100"/><path d="M563.6 35.6V188.6" stroke="#d42a44" stroke-width="1.300"/><path d="M563.6 188.6V193.2" stroke="#20e060" stroke-width="1.300"/></svg>
<span id="t94" class="t serif" style="top:617.28px;font-size:19.2px;line-height:23.04px;color:#10203a;left:547.2px;letter-spacing:1.25px;">Wave: 543.1nm Value: 0.810uW/cm²/nm</span>
<span id="t95" class="t serif" style="top:921px;font-size:16px;line-height:19.2px;color:#0a1a30;left:412.8px;letter-spacing:0.93px;">0.2</span>
<span id="t96" class="t serif" style="top:852px;font-size:16px;line-height:19.2px;color:#0a1a30;left:412.8px;letter-spacing:0.93px;">0.4</span>
<span id="t97" class="t serif" style="top:783px;font-size:16px;line-height:19.2px;color:#0a1a30;left:412.8px;letter-spacing:0.93px;">0.6</span>
<span id="t98" class="t serif" style="top:714px;font-size:16px;line-height:19.2px;color:#0a1a30;left:412.8px;letter-spacing:0.93px;">0.8</span>
<span id="t99" class="t serif" style="top:645px;font-size:16px;line-height:19.2px;color:#0a1a30;left:412.8px;letter-spacing:0.93px;">1.0</span>
<span id="t100" class="t serif" style="top:1003.2px;font-size:16px;line-height:19.2px;color:#0a1a30;left:450.6px;transform:translateX(-50%);letter-spacing:0px;">380</span>
<span id="t101" class="t serif" style="top:1003.2px;font-size:16px;line-height:19.2px;color:#0a1a30;left:547.8px;transform:translateX(-50%);letter-spacing:0px;">420</span>
<span id="t102" class="t serif" style="top:1003.2px;font-size:16px;line-height:19.2px;color:#0a1a30;left:653.8px;transform:translateX(-50%);letter-spacing:0px;">460</span>
<span id="t103" class="t serif" style="top:1003.2px;font-size:16px;line-height:19.2px;color:#0a1a30;left:759.8px;transform:translateX(-50%);letter-spacing:0px;">500</span>
<span id="t104" class="t serif" style="top:1003.2px;font-size:16px;line-height:19.2px;color:#0a1a30;left:865.8px;transform:translateX(-50%);letter-spacing:0px;">540</span>
<span id="t105" class="t serif" style="top:1003.2px;font-size:16px;line-height:19.2px;color:#0a1a30;left:971.8px;transform:translateX(-50%);letter-spacing:0px;">580</span>
<span id="t106" class="t serif" style="top:1003.2px;font-size:16px;line-height:19.2px;color:#0a1a30;left:1077.8px;transform:translateX(-50%);letter-spacing:0px;">620</span>
<span id="t107" class="t serif" style="top:1003.2px;font-size:16px;line-height:19.2px;color:#0a1a30;left:1183.8px;transform:translateX(-50%);letter-spacing:0px;">660</span>
<span id="t108" class="t serif" style="top:1003.2px;font-size:16px;line-height:19.2px;color:#0a1a30;left:1289.8px;transform:translateX(-50%);letter-spacing:0px;">700</span>
<span id="t109" class="t serif" style="top:1003.2px;font-size:16px;line-height:19.2px;color:#0a1a30;left:1395.8px;transform:translateX(-50%);letter-spacing:0px;">740</span>
<span id="t110" class="t serif" style="top:1003.2px;font-size:16px;line-height:19.2px;color:#0a1a30;left:1501.8px;transform:translateX(-50%);letter-spacing:0px;">780</span>
<div style="left:1586.6px;top:111.4px;width:379.4px;height:463px;background:#f3f3f3;border:1.6px solid #e0e0e0;border-right-color:#bdbdbd;border-bottom-color:#bdbdbd"></div>
<div style="left:1587.8px;top:134px;width:377px;height:1.8px;background:#fdfdfd"></div>
<div style="left:1590px;top:115.2px;width:47.2px;height:20.8px;background:#fdfdfd;border:1.8px solid #bcbcbc;border-bottom:none;border-radius:2.4px 2.4px 0 0"></div>
<svg style="left:1946.4px;top:119px" width="12" height="12" viewBox="0 0 6 6" >
<path d="M1 1.100l4 3.900M5 1.100l-4 3.900" stroke="#111" stroke-width="1.250" fill="none"/></svg>
<div style="left:1595.4px;top:117.6px;width:14.8px;height:14.8px;border-radius:50%;background:radial-gradient(circle,#fff 0,rgba(255,255,255,0) 70%),conic-gradient(#ff4040,#ffb020,#e8e820,#40d040,#20d0d0,#4060ff,#c040ff,#ff40a0,#ff4040)"></div>
<span id="t111" class="t" style="top:118.44px;font-size:11.6px;line-height:13.92px;color:#000;left:1613.2px;transform-origin:0 50%;transform:scaleX(0.9313);">CIE</span>
<div style="left:1597.2px;top:145px;width:360.8px;height:424.2px;background:#f0f0f0;border:1.6px solid #999;border-right-color:#b0b0b0;border-bottom-color:#8c8c8c"></div>
<div style="left:1599.2px;top:147px;width:355.6px;height:395.2px;background:#fff;border:1.4px solid #b0b0b0;border-bottom-color:#8a8a8a"></div>
<div style="left:1598.4px;top:543.2px;width:58.8px;height:23.2px;background:#fdfdfd;border:1px solid #d0d0d0;border-top:none"></div>
<div style="left:1710.8px;top:546.8px;width:1px;height:17.2px;background:#c4c4c4"></div>
<div style="left:1767.2px;top:546.8px;width:1px;height:17.2px;background:#c4c4c4"></div>
<span id="t112" class="t" style="top:549.52px;font-size:11.8px;line-height:14.16px;color:#000;left:1602.4px;transform-origin:0 50%;transform:scaleX(0.9352);">CIE 1931</span>
<span id="t113" class="t" style="top:547.92px;font-size:11.8px;line-height:14.16px;color:#000;left:1660.8px;transform-origin:0 50%;transform:scaleX(0.8783);">CIE 1960</span>
<span id="t114" class="t" style="top:547.92px;font-size:11.8px;line-height:14.16px;color:#000;left:1718.4px;transform-origin:0 50%;transform:scaleX(0.8945);">CIE 1976</span>
<svg style="left:0px;top:0px" width="2000" height="1092" viewBox="0 0 1000 546" >
<defs><clipPath id="cLoc"><path d="M843.84 257.93L843.81 257.94L843.76 257.96L843.69 257.97L843.58 257.97L843.46 257.96L843.32 257.91L843.18 257.83L843.03 257.72L842.83 257.56L842.59 257.36L842.31 257.1L841.96 256.79L841.53 256.42L841.04 256L840.44 255.47L839.74 254.88L838.95 254.19L837.99 253.14L836.77 251.56L835.39 249.64L834.12 247.69L833.13 245.95L832.26 244.19L831.3 242.07L830.2 239.51L829.02 236.58L827.75 233.17L826.35 229.28L824.86 224.92L823.35 219.99L821.84 214.44L820.32 208.32L818.82 201.7L817.34 194.49L815.88 186.77L814.57 178.88L813.4 170.81L812.38 162.56L811.59 154.51L811.05 146.7L810.75 139.1L810.76 131.94L811.09 125.23L811.73 118.98L812.7 113.44L814.03 108.68L815.68 104.64L817.56 101.46L819.67 99.27L822.01 97.93L824.44 97.24L826.96 97.21L829.57 97.82L832.2 98.71L834.83 99.81L837.47 101.18L840.07 102.64L842.59 104.14L845.06 105.71L847.49 107.36L849.9 109.06L852.27 110.82L854.63 112.65L856.98 114.54L859.33 116.48L861.66 118.47L863.99 120.5L866.31 122.57L868.62 124.67L870.94 126.8L873.25 128.96L875.56 131.15L877.88 133.35L880.2 135.58L882.52 137.82L884.83 140.06L887.14 142.32L889.44 144.58L891.74 146.84L894.04 149.1L896.32 151.35L898.59 153.59L900.84 155.83L903.07 158.04L905.27 160.23L907.46 162.41L909.62 164.55L911.74 166.67L913.84 168.75L915.9 170.8L917.91 172.8L919.89 174.75L921.8 176.65L923.66 178.51L925.47 180.3L927.19 182.02L928.82 183.65L930.38 185.19L931.87 186.68L933.31 188.11L934.69 189.48L935.99 190.77L937.13 191.89L938.18 192.92L939.41 194.14L941.03 195.75L942.82 197.54L944.41 199.12L945.64 200.35L946.68 201.37L947.6 202.28L948.42 203.11L949.13 203.82L949.76 204.44L950.29 204.96L950.74 205.4L951.12 205.77L951.41 206.07L951.65 206.3L951.89 206.55L952.22 206.88L952.57 207.22L952.81 207.46Z"/></clipPath><filter id="fB" x="-5%" y="-5%" width="110%" height="110%"><feGaussianBlur stdDeviation="1.300"/></filter></defs><style>#cm rect{width:3.3px;height:3.3px}</style><g clip-path="url(#cLoc)"><g id="cm" filter="url(#fB)" shape-rendering="crispEdges"><g transform="translate(0 91.09)"><rect x="816" fill="#00ff00"/><rect x="819" fill="#00ff00"/><rect x="822" fill="#00ff00"/><rect x="825" fill="#00ff00"/><rect x="828" fill="#00ff00"/><rect x="831" fill="#00ff00"/><rect x="834" fill="#00ff00"/></g><g transform="translate(0 94.09)"><rect x="810" fill="#00ff00"/><rect x="813" fill="#00ff00"/><rect x="816" fill="#00ff00"/><rect x="819" fill="#00ff00"/><rect x="822" fill="#00ff00"/><rect x="825" fill="#00ff00"/><rect x="828" fill="#00ff00"/><rect x="831" fill="#00ff00"/><rect x="834" fill="#00ff00"/><rect x="837" fill="#00ff00"/><rect x="840" fill="#00ff00"/></g><g transform="translate(0 97.09)"><rect x="810" fill="#00ff01"/><rect x="813" fill="#00ff00"/><rect x="816" fill="#00ff00"/><rect x="819" fill="#00ff00"/><rect x="822" fill="#00ff00"/><rect x="825" fill="#00ff00"/><rect x="828" fill="#00ff00"/><rect x="831" fill="#00ff00"/><rect x="834" fill="#00ff00"/><rect x="837" fill="#00ff00"/><rect x="840" fill="#00ff00"/><rect x="843" fill="#00ff00"/><rect x="846" fill="#00ff00"/></g><g transform="translate(0 100.09)"><rect x="807" fill="#00ff07"/><rect x="810" fill="#00ff04"/><rect x="813" fill="#00ff02"/><rect x="816" fill="#00ff00"/><rect x="819" fill="#00ff00"/><rect x="822" fill="#00ff00"/><rect x="825" fill="#00ff00"/><rect x="828" fill="#00ff00"/><rect x="831" fill="#00ff00"/><rect x="834" fill="#00ff00"/><rect x="837" fill="#00ff00"/><rect x="840" fill="#00ff00"/><rect x="843" fill="#00ff00"/><rect x="846" fill="#00ff00"/><rect x="849" fill="#00ff00"/><rect x="852" fill="#00ff00"/></g><g transform="translate(0 103.09)"><rect x="807" fill="#00ff0a"/><rect x="810" fill="#00ff08"/><rect x="813" fill="#00ff05"/><rect x="816" fill="#00ff03"/><rect x="819" fill="#00ff00"/><rect x="822" fill="#00ff00"/><rect x="825" fill="#00ff00"/><rect x="828" fill="#00ff00"/><rect x="831" fill="#00ff00"/><rect x="834" fill="#00ff00"/><rect x="837" fill="#00ff00"/><rect x="840" fill="#00ff00"/><rect x="843" fill="#00ff00"/><rect x="846" fill="#00ff00"/><rect x="849" fill="#00ff00"/><rect x="852" fill="#00ff00"/><rect x="855" fill="#00ff00"/></g><g transform="translate(0 106.09)"><rect x="807" fill="#00ff0e"/><rect x="810" fill="#00ff0b"/><rect x="813" fill="#00ff09"/><rect x="816" fill="#00ff06"/><rect x="819" fill="#00ff03"/><rect x="822" fill="#00ff01"/><rect x="825" fill="#00ff00"/><rect x="828" fill="#00ff00"/><rect x="831" fill="#00ff00"/><rect x="834" fill="#00ff00"/><rect x="837" fill="#00ff00"/><rect x="840" fill="#00ff00"/><rect x="843" fill="#00ff00"/><rect x="846" fill="#00ff00"/><rect x="849" fill="#00ff00"/><rect x="852" fill="#00ff00"/><rect x="855" fill="#00ff00"/><rect x="858" fill="#00ff00"/></g><g transform="translate(0 109.09)"><rect x="807" fill="#00ff12"/><rect x="810" fill="#00ff0f"/><rect x="813" fill="#00ff0c"/><rect x="816" fill="#00ff0a"/><rect x="819" fill="#00ff07"/><rect x="822" fill="#00ff04"/><rect x="825" fill="#00ff01"/><rect x="828" fill="#00ff00"/><rect x="831" fill="#00ff00"/><rect x="834" fill="#00ff00"/><rect x="837" fill="#00ff00"/><rect x="840" fill="#00ff00"/><rect x="843" fill="#00ff00"/><rect x="846" fill="#00ff00"/><rect x="849" fill="#00ff00"/><rect x="852" fill="#00ff00"/><rect x="855" fill="#00ff00"/><rect x="858" fill="#00ff00"/><rect x="861" fill="#00ff00"/></g><g transform="translate(0 112.09)"><rect x="804" fill="#00ff18"/><rect x="807" fill="#00ff15"/><rect x="810" fill="#00ff13"/><rect x="813" fill="#00ff10"/><rect x="816" fill="#00ff0e"/><rect x="819" fill="#00ff0b"/><rect x="822" fill="#00ff08"/><rect x="825" fill="#00ff05"/><rect x="828" fill="#00ff02"/><rect x="831" fill="#00ff00"/><rect x="834" fill="#00ff00"/><rect x="837" fill="#00ff00"/><rect x="840" fill="#00ff00"/><rect x="843" fill="#00ff00"/><rect x="846" fill="#00ff00"/><rect x="849" fill="#00ff00"/><rect x="852" fill="#00ff00"/><rect x="855" fill="#00ff00"/><rect x="858" fill="#00ff00"/><rect x="861" fill="#00ff00"/><rect x="864" fill="#00ff00"/><rect x="867" fill="#00ff00"/></g><g transform="translate(0 115.09)"><rect x="804" fill="#00ff1c"/><rect x="807" fill="#00ff19"/><rect x="810" fill="#00ff17"/><rect x="813" fill="#00ff14"/><rect x="816" fill="#00ff12"/><rect x="819" fill="#00ff0f"/><rect x="822" fill="#00ff0c"/><rect x="825" fill="#00ff09"/><rect x="828" fill="#00ff06"/><rect x="831" fill="#00ff03"/><rect x="834" fill="#00ff00"/><rect x="837" fill="#00ff00"/><rect x="840" fill="#00ff00"/><rect x="843" fill="#00ff00"/><rect x="846" fill="#00ff00"/><rect x="849" fill="#00ff00"/><rect x="852" fill="#00ff00"/><rect x="855" fill="#00ff00"/><rect x="858" fill="#00ff00"/><rect x="861" fill="#00ff00"/><rect x="864" fill="#00ff00"/><rect x="867" fill="#00ff00"/><rect x="870" fill="#00ff00"/></g><g transform="translate(0 118.09)"><rect x="804" fill="#00ff20"/><rect x="807" fill="#00ff1e"/><rect x="810" fill="#00ff1b"/><rect x="813" fill="#00ff18"/><rect x="816" fill="#00ff16"/><rect x="819" fill="#00ff13"/><rect x="822" fill="#00ff10"/><rect x="825" fill="#00ff0d"/><rect x="828" fill="#00ff0a"/><rect x="831" fill="#00ff07"/><rect x="834" fill="#00ff04"/><rect x="837" fill="#00ff01"/><rect x="840" fill="#00ff00"/><rect x="843" fill="#00ff00"/><rect x="846" fill="#00ff00"/><rect x="849" fill="#00ff00"/><rect x="852" fill="#00ff00"/><rect x="855" fill="#00ff00"/><rect x="858" fill="#00ff00"/><rect x="861" fill="#00ff00"/><rect x="864" fill="#00ff00"/><rect x="867" fill="#00ff00"/><rect x="870" fill="#00ff00"/><rect x="873" fill="#00ff00"/></g><g transform="translate(0 121.09)"><rect x="804" fill="#00ff24"/><rect x="807" fill="#00ff22"/><rect x="810" fill="#00ff1f"/><rect x="813" fill="#00ff1d"/><rect x="816" fill="#00ff1a"/><rect x="819" fill="#00ff17"/><rect x="822" fill="#00ff14"/><rect x="825" fill="#00ff12"/><rect x="828" fill="#00ff0f"/><rect x="831" fill="#00ff0b"/><rect x="834" fill="#00ff08"/><rect x="837" fill="#00ff05"/><rect x="840" fill="#00ff02"/><rect x="843" fill="#00ff00"/><rect x="846" fill="#00ff00"/><rect x="849" fill="#00ff00"/><rect x="852" fill="#00ff00"/><rect x="855" fill="#00ff00"/><rect x="858" fill="#00ff00"/><rect x="861" fill="#00ff00"/><rect x="864" fill="#00ff00"/><rect x="867" fill="#00ff00"/><rect x="870" fill="#00ff00"/><rect x="873" fill="#03ff00"/><rect x="876" fill="#12ff00"/></g><g transform="translate(0 124.09)"><rect x="804" fill="#00ff29"/><rect x="807" fill="#00ff26"/><rect x="810" fill="#00ff24"/><rect x="813" fill="#00ff21"/><rect x="816" fill="#00ff1f"/><rect x="819" fill="#00ff1c"/><rect x="822" fill="#00ff19"/><rect x="825" fill="#00ff16"/><rect x="828" fill="#00ff13"/><rect x="831" fill="#00ff10"/><rect x="834" fill="#00ff0d"/><rect x="837" fill="#00ff0a"/><rect x="840" fill="#00ff06"/><rect x="843" fill="#00ff03"/><rect x="846" fill="#00ff00"/><rect x="849" fill="#00ff00"/><rect x="852" fill="#00ff00"/><rect x="855" fill="#00ff00"/><rect x="858" fill="#00ff00"/><rect x="861" fill="#00ff00"/><rect x="864" fill="#00ff00"/><rect x="867" fill="#00ff00"/><rect x="870" fill="#00ff00"/><rect x="873" fill="#07ff00"/><rect x="876" fill="#17ff00"/><rect x="879" fill="#27ff00"/></g><g transform="translate(0 127.09)"><rect x="804" fill="#00ff2e"/><rect x="807" fill="#00ff2b"/><rect x="810" fill="#00ff29"/><rect x="813" fill="#00ff26"/><rect x="816" fill="#00ff23"/><rect x="819" fill="#00ff20"/><rect x="822" fill="#00ff1e"/><rect x="825" fill="#00ff1b"/><rect x="828" fill="#00ff18"/><rect x="831" fill="#00ff15"/><rect x="834" fill="#00ff11"/><rect x="837" fill="#00ff0e"/><rect x="840" fill="#00ff0b"/><rect x="843" fill="#00ff07"/><rect x="846" fill="#00ff04"/><rect x="849" fill="#00ff00"/><rect x="852" fill="#00ff00"/><rect x="855" fill="#00ff00"/><rect x="858" fill="#00ff00"/><rect x="861" fill="#00ff00"/><rect x="864" fill="#00ff00"/><rect x="867" fill="#00ff00"/><rect x="870" fill="#00ff00"/><rect x="873" fill="#0cff00"/><rect x="876" fill="#1cff00"/><rect x="879" fill="#2dff00"/><rect x="882" fill="#3eff00"/></g><g transform="translate(0 130.09)"><rect x="804" fill="#00ff33"/><rect x="807" fill="#00ff30"/><rect x="810" fill="#00ff2e"/><rect x="813" fill="#00ff2b"/><rect x="816" fill="#00ff28"/><rect x="819" fill="#00ff25"/><rect x="822" fill="#00ff23"/><rect x="825" fill="#00ff20"/><rect x="828" fill="#00ff1d"/><rect x="831" fill="#00ff1a"/><rect x="834" fill="#00ff16"/><rect x="837" fill="#00ff13"/><rect x="840" fill="#00ff10"/><rect x="843" fill="#00ff0c"/><rect x="846" fill="#00ff09"/><rect x="849" fill="#00ff05"/><rect x="852" fill="#00ff01"/><rect x="855" fill="#00ff00"/><rect x="858" fill="#00ff00"/><rect x="861" fill="#00ff00"/><rect x="864" fill="#00ff00"/><rect x="867" fill="#00ff00"/><rect x="870" fill="#01ff00"/><rect x="873" fill="#11ff00"/><rect x="876" fill="#22ff00"/><rect x="879" fill="#33ff00"/><rect x="882" fill="#45ff00"/><rect x="885" fill="#58ff00"/></g><g transform="translate(0 133.09)"><rect x="804" fill="#00ff38"/><rect x="807" fill="#00ff35"/><rect x="810" fill="#00ff33"/><rect x="813" fill="#00ff30"/><rect x="816" fill="#00ff2d"/><rect x="819" fill="#00ff2b"/><rect x="822" fill="#00ff28"/><rect x="825" fill="#00ff25"/><rect x="828" fill="#00ff22"/><rect x="831" fill="#00ff1f"/><rect x="834" fill="#00ff1c"/><rect x="837" fill="#00ff18"/><rect x="840" fill="#00ff15"/><rect x="843" fill="#00ff11"/><rect x="846" fill="#00ff0e"/><rect x="849" fill="#00ff0a"/><rect x="852" fill="#00ff06"/><rect x="855" fill="#00ff02"/><rect x="858" fill="#00ff00"/><rect x="861" fill="#00ff00"/><rect x="864" fill="#00ff00"/><rect x="867" fill="#00ff00"/><rect x="870" fill="#05ff00"/><rect x="873" fill="#16ff00"/><rect x="876" fill="#27ff00"/><rect x="879" fill="#39ff00"/><rect x="882" fill="#4cff00"/><rect x="885" fill="#60ff00"/><rect x="888" fill="#74ff00"/></g><g transform="translate(0 136.09)"><rect x="804" fill="#00ff3d"/><rect x="807" fill="#00ff3b"/><rect x="810" fill="#00ff38"/><rect x="813" fill="#00ff36"/><rect x="816" fill="#00ff33"/><rect x="819" fill="#00ff30"/><rect x="822" fill="#00ff2d"/><rect x="825" fill="#00ff2a"/><rect x="828" fill="#00ff27"/><rect x="831" fill="#00ff24"/><rect x="834" fill="#00ff21"/><rect x="837" fill="#00ff1e"/><rect x="840" fill="#00ff1a"/><rect x="843" fill="#00ff17"/><rect x="846" fill="#00ff13"/><rect x="849" fill="#00ff0f"/><rect x="852" fill="#00ff0c"/><rect x="855" fill="#00ff08"/><rect x="858" fill="#00ff04"/><rect x="861" fill="#00ff00"/><rect x="864" fill="#00ff00"/><rect x="867" fill="#00ff00"/><rect x="870" fill="#0aff00"/><rect x="873" fill="#1cff00"/><rect x="876" fill="#2eff00"/><rect x="879" fill="#40ff00"/><rect x="882" fill="#54ff00"/><rect x="885" fill="#68ff00"/><rect x="888" fill="#7dff00"/><rect x="891" fill="#93ff00"/></g><g transform="translate(0 139.09)"><rect x="804" fill="#00ff43"/><rect x="807" fill="#00ff40"/><rect x="810" fill="#00ff3e"/><rect x="813" fill="#00ff3b"/><rect x="816" fill="#00ff39"/><rect x="819" fill="#00ff36"/><rect x="822" fill="#00ff33"/><rect x="825" fill="#00ff30"/><rect x="828" fill="#00ff2d"/><rect x="831" fill="#00ff2a"/><rect x="834" fill="#00ff27"/><rect x="837" fill="#00ff23"/><rect x="840" fill="#00ff20"/><rect x="843" fill="#00ff1d"/><rect x="846" fill="#00ff19"/><rect x="849" fill="#00ff15"/><rect x="852" fill="#00ff11"/><rect x="855" fill="#00ff0d"/><rect x="858" fill="#00ff09"/><rect x="861" fill="#00ff05"/><rect x="864" fill="#00ff00"/><rect x="867" fill="#00ff00"/><rect x="870" fill="#0fff00"/><rect x="873" fill="#22ff00"/><rect x="876" fill="#34ff00"/><rect x="879" fill="#48ff00"/><rect x="882" fill="#5cff00"/><rect x="885" fill="#71ff00"/><rect x="888" fill="#87ff00"/><rect x="891" fill="#9eff00"/><rect x="894" fill="#b6ff00"/></g><g transform="translate(0 142.09)"><rect x="804" fill="#00ff49"/><rect x="807" fill="#00ff46"/><rect x="810" fill="#00ff44"/><rect x="813" fill="#00ff41"/><rect x="816" fill="#00ff3f"/><rect x="819" fill="#00ff3c"/><rect x="822" fill="#00ff39"/><rect x="825" fill="#00ff36"/><rect x="828" fill="#00ff33"/><rect x="831" fill="#00ff30"/><rect x="834" fill="#00ff2d"/><rect x="837" fill="#00ff2a"/><rect x="840" fill="#00ff26"/><rect x="843" fill="#00ff23"/><rect x="846" fill="#00ff1f"/><rect x="849" fill="#00ff1b"/><rect x="852" fill="#00ff17"/><rect x="855" fill="#00ff13"/><rect x="858" fill="#00ff0f"/><rect x="861" fill="#00ff0b"/><rect x="864" fill="#00ff06"/><rect x="867" fill="#03ff02"/><rect x="870" fill="#15ff00"/><rect x="873" fill="#28ff00"/><rect x="876" fill="#3bff00"/><rect x="879" fill="#50ff00"/><rect x="882" fill="#65ff00"/><rect x="885" fill="#7bff00"/><rect x="888" fill="#92ff00"/><rect x="891" fill="#abff00"/><rect x="894" fill="#c4ff00"/><rect x="897" fill="#deff00"/></g><g transform="translate(0 145.09)"><rect x="804" fill="#00ff4f"/><rect x="807" fill="#00ff4d"/><rect x="810" fill="#00ff4a"/><rect x="813" fill="#00ff48"/><rect x="816" fill="#00ff45"/><rect x="819" fill="#00ff42"/><rect x="822" fill="#00ff3f"/><rect x="825" fill="#00ff3d"/><rect x="828" fill="#00ff3a"/><rect x="831" fill="#00ff36"/><rect x="834" fill="#00ff33"/><rect x="837" fill="#00ff30"/><rect x="840" fill="#00ff2d"/><rect x="843" fill="#00ff29"/><rect x="846" fill="#00ff25"/><rect x="849" fill="#00ff22"/><rect x="852" fill="#00ff1e"/><rect x="855" fill="#00ff1a"/><rect x="858" fill="#00ff16"/><rect x="861" fill="#00ff11"/><rect x="864" fill="#00ff0d"/><rect x="867" fill="#08ff08"/><rect x="870" fill="#1bff03"/><rect x="873" fill="#2fff00"/><rect x="876" fill="#43ff00"/><rect x="879" fill="#59ff00"/><rect x="882" fill="#6fff00"/><rect x="885" fill="#86ff00"/><rect x="888" fill="#9eff00"/><rect x="891" fill="#b8ff00"/><rect x="894" fill="#d3ff00"/><rect x="897" fill="#efff00"/><rect x="900" fill="#fff300"/></g><g transform="translate(0 148.09)"><rect x="804" fill="#00ff56"/><rect x="807" fill="#00ff53"/><rect x="810" fill="#00ff51"/><rect x="813" fill="#00ff4e"/><rect x="816" fill="#00ff4c"/><rect x="819" fill="#00ff49"/><rect x="822" fill="#00ff46"/><rect x="825" fill="#00ff43"/><rect x="828" fill="#00ff40"/><rect x="831" fill="#00ff3d"/><rect x="834" fill="#00ff3a"/><rect x="837" fill="#00ff37"/><rect x="840" fill="#00ff33"/><rect x="843" fill="#00ff30"/><rect x="846" fill="#00ff2c"/><rect x="849" fill="#00ff29"/><rect x="852" fill="#00ff25"/><rect x="855" fill="#00ff21"/><rect x="858" fill="#00ff1c"/><rect x="861" fill="#00ff18"/><rect x="864" fill="#00ff14"/><rect x="867" fill="#0eff0f"/><rect x="870" fill="#21ff0a"/><rect x="873" fill="#36ff05"/><rect x="876" fill="#4bff00"/><rect x="879" fill="#62ff00"/><rect x="882" fill="#79ff00"/><rect x="885" fill="#92ff00"/><rect x="888" fill="#abff00"/><rect x="891" fill="#c6ff00"/><rect x="894" fill="#e3ff00"/><rect x="897" fill="#fffe00"/><rect x="900" fill="#ffe200"/><rect x="903" fill="#ffcb00"/></g><g transform="translate(0 151.09)"><rect x="804" fill="#00ff5d"/><rect x="807" fill="#00ff5a"/><rect x="810" fill="#00ff58"/><rect x="813" fill="#00ff55"/><rect x="816" fill="#00ff53"/><rect x="819" fill="#00ff50"/><rect x="822" fill="#00ff4d"/><rect x="825" fill="#00ff4a"/><rect x="828" fill="#00ff47"/><rect x="831" fill="#00ff44"/><rect x="834" fill="#00ff41"/><rect x="837" fill="#00ff3e"/><rect x="840" fill="#00ff3b"/><rect x="843" fill="#00ff37"/><rect x="846" fill="#00ff34"/><rect x="849" fill="#00ff30"/><rect x="852" fill="#00ff2c"/><rect x="855" fill="#00ff28"/><rect x="858" fill="#00ff24"/><rect x="861" fill="#00ff1f"/><rect x="864" fill="#00ff1b"/><rect x="867" fill="#14ff16"/><rect x="870" fill="#28ff11"/><rect x="873" fill="#3eff0c"/><rect x="876" fill="#54ff07"/><rect x="879" fill="#6cff01"/><rect x="882" fill="#85ff00"/><rect x="885" fill="#9eff00"/><rect x="888" fill="#baff00"/><rect x="891" fill="#d6ff00"/><rect x="894" fill="#f4ff00"/><rect x="897" fill="#ffec00"/><rect x="900" fill="#ffd300"/><rect x="903" fill="#ffbd00"/><rect x="906" fill="#ffab00"/></g><g transform="translate(0 154.09)"><rect x="804" fill="#00ff64"/><rect x="807" fill="#00ff62"/><rect x="810" fill="#00ff5f"/><rect x="813" fill="#00ff5d"/><rect x="816" fill="#00ff5a"/><rect x="819" fill="#00ff58"/><rect x="822" fill="#00ff55"/><rect x="825" fill="#00ff52"/><rect x="828" fill="#00ff4f"/><rect x="831" fill="#00ff4c"/><rect x="834" fill="#00ff49"/><rect x="837" fill="#00ff46"/><rect x="840" fill="#00ff42"/><rect x="843" fill="#00ff3f"/><rect x="846" fill="#00ff3b"/><rect x="849" fill="#00ff38"/><rect x="852" fill="#00ff34"/><rect x="855" fill="#00ff30"/><rect x="858" fill="#00ff2c"/><rect x="861" fill="#00ff27"/><rect x="864" fill="#05ff23"/><rect x="867" fill="#1aff1e"/><rect x="870" fill="#30ff19"/><rect x="873" fill="#46ff14"/><rect x="876" fill="#5eff0e"/><rect x="879" fill="#77ff09"/><rect x="882" fill="#91ff03"/><rect x="885" fill="#acff00"/><rect x="888" fill="#c9ff00"/><rect x="891" fill="#e7ff00"/><rect x="894" fill="#fff700"/><rect x="897" fill="#ffdb00"/><rect x="900" fill="#ffc400"/><rect x="903" fill="#ffb000"/><rect x="906" fill="#ff9f00"/><rect x="909" fill="#ff9000"/></g><g transform="translate(0 157.09)"><rect x="804" fill="#00ff6c"/><rect x="807" fill="#00ff69"/><rect x="810" fill="#00ff67"/><rect x="813" fill="#00ff65"/><rect x="816" fill="#00ff62"/><rect x="819" fill="#00ff60"/><rect x="822" fill="#00ff5d"/><rect x="825" fill="#00ff5a"/><rect x="828" fill="#00ff57"/><rect x="831" fill="#00ff54"/><rect x="834" fill="#00ff51"/><rect x="837" fill="#00ff4e"/><rect x="840" fill="#00ff4b"/><rect x="843" fill="#00ff47"/><rect x="846" fill="#00ff44"/><rect x="849" fill="#00ff40"/><rect x="852" fill="#00ff3c"/><rect x="855" fill="#00ff38"/><rect x="858" fill="#00ff34"/><rect x="861" fill="#00ff30"/><rect x="864" fill="#0cff2b"/><rect x="867" fill="#21ff26"/><rect x="870" fill="#38ff21"/><rect x="873" fill="#50ff1c"/><rect x="876" fill="#69ff17"/><rect x="879" fill="#83ff11"/><rect x="882" fill="#9eff0b"/><rect x="885" fill="#bbff05"/><rect x="888" fill="#daff00"/><rect x="891" fill="#faff00"/><rect x="894" fill="#ffe500"/><rect x="897" fill="#ffcb00"/><rect x="900" fill="#ffb500"/><rect x="903" fill="#ffa300"/><rect x="906" fill="#ff9300"/><rect x="909" fill="#ff8500"/><rect x="912" fill="#ff7900"/></g><g transform="translate(0 160.09)"><rect x="804" fill="#00ff74"/><rect x="807" fill="#00ff72"/><rect x="810" fill="#00ff6f"/><rect x="813" fill="#00ff6d"/><rect x="816" fill="#00ff6a"/><rect x="819" fill="#00ff68"/><rect x="822" fill="#00ff65"/><rect x="825" fill="#00ff63"/><rect x="828" fill="#00ff60"/><rect x="831" fill="#00ff5d"/><rect x="834" fill="#00ff5a"/><rect x="837" fill="#00ff57"/><rect x="840" fill="#00ff54"/><rect x="843" fill="#00ff50"/><rect x="846" fill="#00ff4d"/><rect x="849" fill="#00ff49"/><rect x="852" fill="#00ff45"/><rect x="855" fill="#00ff41"/><rect x="858" fill="#00ff3d"/><rect x="861" fill="#00ff39"/><rect x="864" fill="#12ff34"/><rect x="867" fill="#29ff30"/><rect x="870" fill="#41ff2b"/><rect x="873" fill="#5aff25"/><rect x="876" fill="#74ff20"/><rect x="879" fill="#90ff1a"/><rect x="882" fill="#adff14"/><rect x="885" fill="#ccff0e"/><rect x="888" fill="#edff07"/><rect x="891" fill="#fff000"/><rect x="894" fill="#ffd300"/><rect x="897" fill="#ffbc00"/><rect x="900" fill="#ffa800"/><rect x="903" fill="#ff9600"/><rect x="906" fill="#ff8800"/><rect x="909" fill="#ff7b00"/><rect x="912" fill="#ff6f00"/><rect x="915" fill="#ff6500"/></g><g transform="translate(0 163.09)"><rect x="807" fill="#00ff7a"/><rect x="810" fill="#00ff78"/><rect x="813" fill="#00ff76"/><rect x="816" fill="#00ff73"/><rect x="819" fill="#00ff71"/><rect x="822" fill="#00ff6e"/><rect x="825" fill="#00ff6c"/><rect x="828" fill="#00ff69"/><rect x="831" fill="#00ff66"/><rect x="834" fill="#00ff63"/><rect x="837" fill="#00ff60"/><rect x="840" fill="#00ff5d"/><rect x="843" fill="#00ff5a"/><rect x="846" fill="#00ff56"/><rect x="849" fill="#00ff53"/><rect x="852" fill="#00ff4f"/><rect x="855" fill="#00ff4b"/><rect x="858" fill="#00ff47"/><rect x="861" fill="#02ff43"/><rect x="864" fill="#19ff3e"/><rect x="867" fill="#31ff3a"/><rect x="870" fill="#4aff35"/><rect x="873" fill="#65ff2f"/><rect x="876" fill="#81ff2a"/><rect x="879" fill="#9eff24"/><rect x="882" fill="#beff1e"/><rect x="885" fill="#dfff18"/><rect x="888" fill="#fffd11"/><rect x="891" fill="#ffdd08"/><rect x="894" fill="#ffc301"/><rect x="897" fill="#ffad00"/><rect x="900" fill="#ff9a00"/><rect x="903" fill="#ff8b00"/><rect x="906" fill="#ff7d00"/><rect x="909" fill="#ff7100"/><rect x="912" fill="#ff6600"/><rect x="915" fill="#ff5d00"/><rect x="918" fill="#ff5400"/></g><g transform="translate(0 166.09)"><rect x="807" fill="#00ff84"/><rect x="810" fill="#00ff81"/><rect x="813" fill="#00ff7f"/><rect x="816" fill="#00ff7d"/><rect x="819" fill="#00ff7b"/><rect x="822" fill="#00ff78"/><rect x="825" fill="#00ff76"/><rect x="828" fill="#00ff73"/><rect x="831" fill="#00ff70"/><rect x="834" fill="#00ff6d"/><rect x="837" fill="#00ff6b"/><rect x="840" fill="#00ff67"/><rect x="843" fill="#00ff64"/><rect x="846" fill="#00ff61"/><rect x="849" fill="#00ff5d"/><rect x="852" fill="#00ff5a"/><rect x="855" fill="#00ff56"/><rect x="858" fill="#00ff52"/><rect x="861" fill="#09ff4e"/><rect x="864" fill="#21ff49"/><rect x="867" fill="#3aff45"/><rect x="870" fill="#55ff40"/><rect x="873" fill="#71ff3b"/><rect x="876" fill="#8fff35"/><rect x="879" fill="#aeff2f"/><rect x="882" fill="#d0ff29"/><rect x="885" fill="#f3ff23"/><rect x="888" fill="#ffe819"/><rect x="891" fill="#ffcb10"/><rect x="894" fill="#ffb309"/><rect x="897" fill="#ff9f03"/><rect x="900" fill="#ff8e00"/><rect x="903" fill="#ff7f00"/><rect x="906" fill="#ff7200"/><rect x="909" fill="#ff6700"/><rect x="912" fill="#ff5d00"/><rect x="915" fill="#ff5500"/><rect x="918" fill="#ff4d00"/><rect x="921" fill="#ff4500"/></g><g transform="translate(0 169.09)"><rect x="807" fill="#00ff8d"/><rect x="810" fill="#00ff8b"/><rect x="813" fill="#00ff89"/><rect x="816" fill="#00ff87"/><rect x="819" fill="#00ff85"/><rect x="822" fill="#00ff83"/><rect x="825" fill="#00ff80"/><rect x="828" fill="#00ff7e"/><rect x="831" fill="#00ff7b"/><rect x="834" fill="#00ff78"/><rect x="837" fill="#00ff76"/><rect x="840" fill="#00ff73"/><rect x="843" fill="#00ff6f"/><rect x="846" fill="#00ff6c"/><rect x="849" fill="#00ff69"/><rect x="852" fill="#00ff65"/><rect x="855" fill="#00ff62"/><rect x="858" fill="#00ff5e"/><rect x="861" fill="#10ff5a"/><rect x="864" fill="#2aff55"/><rect x="867" fill="#44ff51"/><rect x="870" fill="#61ff4c"/><rect x="873" fill="#7fff47"/><rect x="876" fill="#9eff41"/><rect x="879" fill="#c0ff3c"/><rect x="882" fill="#e4ff36"/><rect x="885" fill="#fff42d"/><rect x="888" fill="#ffd421"/><rect x="891" fill="#ffba18"/><rect x="894" fill="#ffa410"/><rect x="897" fill="#ff9109"/><rect x="900" fill="#ff8204"/><rect x="903" fill="#ff7400"/><rect x="906" fill="#ff6800"/><rect x="909" fill="#ff5e00"/><rect x="912" fill="#ff5500"/><rect x="915" fill="#ff4d00"/><rect x="918" fill="#ff4500"/><rect x="921" fill="#ff3e00"/><rect x="924" fill="#ff3800"/></g><g transform="translate(0 172.09)"><rect x="807" fill="#00ff98"/><rect x="810" fill="#00ff96"/><rect x="813" fill="#00ff94"/><rect x="816" fill="#00ff92"/><rect x="819" fill="#00ff90"/><rect x="822" fill="#00ff8e"/><rect x="825" fill="#00ff8b"/><rect x="828" fill="#00ff89"/><rect x="831" fill="#00ff87"/><rect x="834" fill="#00ff84"/><rect x="837" fill="#00ff81"/><rect x="840" fill="#00ff7f"/><rect x="843" fill="#00ff7c"/><rect x="846" fill="#00ff79"/><rect x="849" fill="#00ff75"/><rect x="852" fill="#00ff72"/><rect x="855" fill="#00ff6e"/><rect x="858" fill="#00ff6b"/><rect x="861" fill="#18ff67"/><rect x="864" fill="#33ff62"/><rect x="867" fill="#50ff5e"/><rect x="870" fill="#6eff59"/><rect x="873" fill="#8eff54"/><rect x="876" fill="#b0ff4f"/><rect x="879" fill="#d4ff4a"/><rect x="882" fill="#fbff44"/><rect x="885" fill="#ffdf35"/><rect x="888" fill="#ffc129"/><rect x="891" fill="#ffa91f"/><rect x="894" fill="#ff9617"/><rect x="897" fill="#ff8510"/><rect x="900" fill="#ff760a"/><rect x="903" fill="#ff6a05"/><rect x="906" fill="#ff5f00"/><rect x="909" fill="#ff5500"/><rect x="912" fill="#ff4c00"/><rect x="915" fill="#ff4500"/><rect x="918" fill="#ff3e00"/><rect x="921" fill="#ff3800"/><rect x="924" fill="#ff3200"/><rect x="927" fill="#ff2d00"/></g><g transform="translate(0 175.09)"><rect x="807" fill="#00ffa3"/><rect x="810" fill="#00ffa1"/><rect x="813" fill="#00ffa0"/><rect x="816" fill="#00ff9e"/><rect x="819" fill="#00ff9c"/><rect x="822" fill="#00ff9a"/><rect x="825" fill="#00ff98"/><rect x="828" fill="#00ff95"/><rect x="831" fill="#00ff93"/><rect x="834" fill="#00ff91"/><rect x="837" fill="#00ff8e"/><rect x="840" fill="#00ff8c"/><rect x="843" fill="#00ff89"/><rect x="846" fill="#00ff86"/><rect x="849" fill="#00ff83"/><rect x="852" fill="#00ff80"/><rect x="855" fill="#00ff7c"/><rect x="858" fill="#06ff79"/><rect x="861" fill="#21ff75"/><rect x="864" fill="#3dff71"/><rect x="867" fill="#5cff6d"/><rect x="870" fill="#7cff68"/><rect x="873" fill="#9eff64"/><rect x="876" fill="#c3ff5f"/><rect x="879" fill="#eaff59"/><rect x="882" fill="#ffeb4d"/><rect x="885" fill="#ffca3d"/><rect x="888" fill="#ffb030"/><rect x="891" fill="#ff9a26"/><rect x="894" fill="#ff881d"/><rect x="897" fill="#ff7816"/><rect x="900" fill="#ff6b10"/><rect x="903" fill="#ff5f0a"/><rect x="906" fill="#ff5505"/><rect x="909" fill="#ff4c01"/><rect x="912" fill="#ff4400"/><rect x="915" fill="#ff3d00"/><rect x="918" fill="#ff3700"/><rect x="921" fill="#ff3100"/><rect x="924" fill="#ff2c00"/><rect x="927" fill="#ff2700"/><rect x="930" fill="#ff2200"/></g><g transform="translate(0 178.09)"><rect x="807" fill="#00ffaf"/><rect x="810" fill="#00ffae"/><rect x="813" fill="#00ffac"/><rect x="816" fill="#00ffaa"/><rect x="819" fill="#00ffa9"/><rect x="822" fill="#00ffa7"/><rect x="825" fill="#00ffa5"/><rect x="828" fill="#00ffa3"/><rect x="831" fill="#00ffa1"/><rect x="834" fill="#00ff9f"/><rect x="837" fill="#00ff9c"/><rect x="840" fill="#00ff9a"/><rect x="843" fill="#00ff97"/><rect x="846" fill="#00ff95"/><rect x="849" fill="#00ff92"/><rect x="852" fill="#00ff8f"/><rect x="855" fill="#00ff8c"/><rect x="858" fill="#0eff89"/><rect x="861" fill="#2bff85"/><rect x="864" fill="#49ff81"/><rect x="867" fill="#6aff7d"/><rect x="870" fill="#8cff79"/><rect x="873" fill="#b1ff75"/><rect x="876" fill="#d9ff70"/><rect x="879" fill="#fffb69"/><rect x="882" fill="#ffd555"/><rect x="885" fill="#ffb744"/><rect x="888" fill="#ff9f37"/><rect x="891" fill="#ff8b2d"/><rect x="894" fill="#ff7b24"/><rect x="897" fill="#ff6d1c"/><rect x="900" fill="#ff6015"/><rect x="903" fill="#ff5610"/><rect x="906" fill="#ff4c0a"/><rect x="909" fill="#ff4406"/><rect x="912" fill="#ff3d02"/><rect x="915" fill="#ff3600"/><rect x="918" fill="#ff3000"/><rect x="921" fill="#ff2b00"/><rect x="924" fill="#ff2600"/><rect x="927" fill="#ff2100"/><rect x="930" fill="#ff1d00"/><rect x="933" fill="#ff1900"/></g><g transform="translate(0 181.09)"><rect x="807" fill="#00ffbc"/><rect x="810" fill="#00ffbb"/><rect x="813" fill="#00ffb9"/><rect x="816" fill="#00ffb8"/><rect x="819" fill="#00ffb6"/><rect x="822" fill="#00ffb5"/><rect x="825" fill="#00ffb3"/><rect x="828" fill="#00ffb1"/><rect x="831" fill="#00ffaf"/><rect x="834" fill="#00ffae"/><rect x="837" fill="#00ffac"/><rect x="840" fill="#00ffa9"/><rect x="843" fill="#00ffa7"/><rect x="846" fill="#00ffa5"/><rect x="849" fill="#00ffa2"/><rect x="852" fill="#00ffa0"/><rect x="855" fill="#00ff9d"/><rect x="858" fill="#17ff9a"/><rect x="861" fill="#35ff97"/><rect x="864" fill="#56ff94"/><rect x="867" fill="#79ff90"/><rect x="870" fill="#9eff8c"/><rect x="873" fill="#c7ff88"/><rect x="876" fill="#f2ff84"/><rect x="879" fill="#ffe170"/><rect x="882" fill="#ffc05c"/><rect x="885" fill="#ffa54b"/><rect x="888" fill="#ff903e"/><rect x="891" fill="#ff7e33"/><rect x="894" fill="#ff6e2a"/><rect x="897" fill="#ff6122"/><rect x="900" fill="#ff561b"/><rect x="903" fill="#ff4c15"/><rect x="906" fill="#ff440f"/><rect x="909" fill="#ff3c0b"/><rect x="912" fill="#ff3506"/><rect x="915" fill="#ff2f03"/><rect x="918" fill="#ff2900"/><rect x="921" fill="#ff2400"/><rect x="924" fill="#ff2000"/><rect x="927" fill="#ff1b00"/><rect x="930" fill="#ff1800"/><rect x="933" fill="#ff1400"/><rect x="936" fill="#ff1100"/></g><g transform="translate(0 184.09)"><rect x="807" fill="#00ffca"/><rect x="810" fill="#00ffc9"/><rect x="813" fill="#00ffc8"/><rect x="816" fill="#00ffc6"/><rect x="819" fill="#00ffc5"/><rect x="822" fill="#00ffc4"/><rect x="825" fill="#00ffc3"/><rect x="828" fill="#00ffc1"/><rect x="831" fill="#00ffc0"/><rect x="834" fill="#00ffbe"/><rect x="837" fill="#00ffbc"/><rect x="840" fill="#00ffbb"/><rect x="843" fill="#00ffb9"/><rect x="846" fill="#00ffb7"/><rect x="849" fill="#00ffb5"/><rect x="852" fill="#00ffb2"/><rect x="855" fill="#02ffb0"/><rect x="858" fill="#21ffae"/><rect x="861" fill="#41ffab"/><rect x="864" fill="#65ffa8"/><rect x="867" fill="#8bffa5"/><rect x="870" fill="#b3ffa2"/><rect x="873" fill="#dfff9e"/><rect x="876" fill="#fff192"/><rect x="879" fill="#ffca77"/><rect x="882" fill="#ffac62"/><rect x="885" fill="#ff9452"/><rect x="888" fill="#ff8144"/><rect x="891" fill="#ff7039"/><rect x="894" fill="#ff622f"/><rect x="897" fill="#ff5627"/><rect x="900" fill="#ff4c20"/><rect x="903" fill="#ff431a"/><rect x="906" fill="#ff3b14"/><rect x="909" fill="#ff340f"/><rect x="912" fill="#ff2e0b"/><rect x="915" fill="#ff2807"/><rect x="918" fill="#ff2303"/><rect x="921" fill="#ff1e00"/><rect x="924" fill="#ff1a00"/><rect x="927" fill="#ff1600"/><rect x="930" fill="#ff1200"/><rect x="933" fill="#ff0f00"/><rect x="936" fill="#ff0c00"/><rect x="939" fill="#ff0900"/></g><g transform="translate(0 187.09)"><rect x="810" fill="#00ffd8"/><rect x="813" fill="#00ffd7"/><rect x="816" fill="#00ffd6"/><rect x="819" fill="#00ffd5"/><rect x="822" fill="#00ffd4"/><rect x="825" fill="#00ffd3"/><rect x="828" fill="#00ffd2"/><rect x="831" fill="#00ffd1"/><rect x="834" fill="#00ffd0"/><rect x="837" fill="#00ffcf"/><rect x="840" fill="#00ffcd"/><rect x="843" fill="#00ffcc"/><rect x="846" fill="#00ffcb"/><rect x="849" fill="#00ffc9"/><rect x="852" fill="#00ffc7"/><rect x="855" fill="#0bffc6"/><rect x="858" fill="#2cffc4"/><rect x="861" fill="#4fffc2"/><rect x="864" fill="#75ffbf"/><rect x="867" fill="#9effbd"/><rect x="870" fill="#cbffba"/><rect x="873" fill="#fbffb8"/><rect x="876" fill="#ffd698"/><rect x="879" fill="#ffb47d"/><rect x="882" fill="#ff9a69"/><rect x="885" fill="#ff8458"/><rect x="888" fill="#ff724a"/><rect x="891" fill="#ff643f"/><rect x="894" fill="#ff5735"/><rect x="897" fill="#ff4c2c"/><rect x="900" fill="#ff4325"/><rect x="903" fill="#ff3a1f"/><rect x="906" fill="#ff3319"/><rect x="909" fill="#ff2c14"/><rect x="912" fill="#ff270f"/><rect x="915" fill="#ff210b"/><rect x="918" fill="#ff1c07"/><rect x="921" fill="#ff1804"/><rect x="924" fill="#ff1401"/><rect x="927" fill="#ff1000"/><rect x="930" fill="#ff0d00"/><rect x="933" fill="#ff0a00"/><rect x="936" fill="#ff0700"/><rect x="939" fill="#ff0400"/><rect x="942" fill="#ff0200"/></g><g transform="translate(0 190.09)"><rect x="810" fill="#00ffe9"/><rect x="813" fill="#00ffe8"/><rect x="816" fill="#00ffe8"/><rect x="819" fill="#00ffe7"/><rect x="822" fill="#00ffe7"/><rect x="825" fill="#00ffe6"/><rect x="828" fill="#00ffe5"/><rect x="831" fill="#00ffe5"/><rect x="834" fill="#00ffe4"/><rect x="837" fill="#00ffe3"/><rect x="840" fill="#00ffe2"/><rect x="843" fill="#00ffe2"/><rect x="846" fill="#00ffe1"/><rect x="849" fill="#00ffe0"/><rect x="852" fill="#00ffdf"/><rect x="855" fill="#15ffde"/><rect x="858" fill="#38ffdd"/><rect x="861" fill="#5fffdb"/><rect x="864" fill="#88ffda"/><rect x="867" fill="#b5ffd9"/><rect x="870" fill="#e6ffd7"/><rect x="873" fill="#ffe5c0"/><rect x="876" fill="#ffbe9e"/><rect x="879" fill="#ffa083"/><rect x="882" fill="#ff886f"/><rect x="885" fill="#ff755e"/><rect x="888" fill="#ff6550"/><rect x="891" fill="#ff5744"/><rect x="894" fill="#ff4c3a"/><rect x="897" fill="#ff4231"/><rect x="900" fill="#ff392a"/><rect x="903" fill="#ff3223"/><rect x="906" fill="#ff2b1d"/><rect x="909" fill="#ff2518"/><rect x="912" fill="#ff2013"/><rect x="915" fill="#ff1b0f"/><rect x="918" fill="#ff160b"/><rect x="921" fill="#ff1208"/><rect x="924" fill="#ff0f05"/><rect x="927" fill="#ff0b02"/><rect x="930" fill="#ff0800"/><rect x="933" fill="#ff0500"/><rect x="936" fill="#ff0200"/><rect x="939" fill="#ff0000"/><rect x="942" fill="#ff0000"/><rect x="945" fill="#ff0000"/></g><g transform="translate(0 193.09)"><rect x="810" fill="#00fffb"/><rect x="813" fill="#00fffb"/><rect x="816" fill="#00fffb"/><rect x="819" fill="#00fffa"/><rect x="822" fill="#00fffa"/><rect x="825" fill="#00fffa"/><rect x="828" fill="#00fffa"/><rect x="831" fill="#00fffa"/><rect x="834" fill="#00fffa"/><rect x="837" fill="#00fffa"/><rect x="840" fill="#00fffa"/><rect x="843" fill="#00fffa"/><rect x="846" fill="#00fffa"/><rect x="849" fill="#00fffa"/><rect x="852" fill="#00fffa"/><rect x="855" fill="#20fff9"/><rect x="858" fill="#47fff9"/><rect x="861" fill="#71fff9"/><rect x="864" fill="#9efff9"/><rect x="867" fill="#d0fff9"/><rect x="870" fill="#fff8f1"/><rect x="873" fill="#ffcac5"/><rect x="876" fill="#ffa7a3"/><rect x="879" fill="#ff8d89"/><rect x="882" fill="#ff7874"/><rect x="885" fill="#ff6663"/><rect x="888" fill="#ff5855"/><rect x="891" fill="#ff4c49"/><rect x="894" fill="#ff413f"/><rect x="897" fill="#ff3836"/><rect x="900" fill="#ff302f"/><rect x="903" fill="#ff2928"/><rect x="906" fill="#ff2322"/><rect x="909" fill="#ff1e1c"/><rect x="912" fill="#ff1917"/><rect x="915" fill="#ff1413"/><rect x="918" fill="#ff100f"/><rect x="921" fill="#ff0d0b"/><rect x="924" fill="#ff0908"/><rect x="927" fill="#ff0605"/><rect x="930" fill="#ff0302"/><rect x="933" fill="#ff0000"/><rect x="936" fill="#ff0000"/><rect x="939" fill="#ff0000"/><rect x="942" fill="#ff0000"/><rect x="945" fill="#ff0000"/><rect x="948" fill="#ff0000"/></g><g transform="translate(0 196.09)"><rect x="810" fill="#00f1ff"/><rect x="813" fill="#00f0ff"/><rect x="816" fill="#00f0ff"/><rect x="819" fill="#00efff"/><rect x="822" fill="#00efff"/><rect x="825" fill="#00eeff"/><rect x="828" fill="#00eeff"/><rect x="831" fill="#00edff"/><rect x="834" fill="#00edff"/><rect x="837" fill="#00ecff"/><rect x="840" fill="#00ebff"/><rect x="843" fill="#00ebff"/><rect x="846" fill="#00eaff"/><rect x="849" fill="#00e9ff"/><rect x="852" fill="#06e8ff"/><rect x="855" fill="#29e7ff"/><rect x="858" fill="#4fe6ff"/><rect x="861" fill="#78e5ff"/><rect x="864" fill="#a5e4ff"/><rect x="867" fill="#d5e3ff"/><rect x="870" fill="#ffd8f5"/><rect x="873" fill="#ffb0c9"/><rect x="876" fill="#ff92a8"/><rect x="879" fill="#ff7b8e"/><rect x="882" fill="#ff687a"/><rect x="885" fill="#ff5969"/><rect x="888" fill="#ff4c5a"/><rect x="891" fill="#ff414e"/><rect x="894" fill="#ff3744"/><rect x="897" fill="#ff2f3b"/><rect x="900" fill="#ff2833"/><rect x="903" fill="#ff222c"/><rect x="906" fill="#ff1c26"/><rect x="909" fill="#ff1720"/><rect x="912" fill="#ff121b"/><rect x="915" fill="#ff0e17"/><rect x="918" fill="#ff0a13"/><rect x="921" fill="#ff070f"/><rect x="924" fill="#ff040c"/><rect x="927" fill="#ff0108"/><rect x="930" fill="#ff0005"/><rect x="933" fill="#ff0003"/><rect x="936" fill="#ff0000"/><rect x="939" fill="#ff0000"/><rect x="942" fill="#ff0000"/><rect x="945" fill="#ff0000"/><rect x="948" fill="#ff0000"/><rect x="951" fill="#ff0000"/></g><g transform="translate(0 199.09)"><rect x="810" fill="#00dfff"/><rect x="813" fill="#00deff"/><rect x="816" fill="#00ddff"/><rect x="819" fill="#00dcff"/><rect x="822" fill="#00dbff"/><rect x="825" fill="#00daff"/><rect x="828" fill="#00d9ff"/><rect x="831" fill="#00d8ff"/><rect x="834" fill="#00d7ff"/><rect x="837" fill="#00d6ff"/><rect x="840" fill="#00d4ff"/><rect x="843" fill="#00d3ff"/><rect x="846" fill="#00d2ff"/><rect x="849" fill="#00d0ff"/><rect x="852" fill="#0fceff"/><rect x="855" fill="#31ccff"/><rect x="858" fill="#55cbff"/><rect x="861" fill="#7dc8ff"/><rect x="864" fill="#a7c6ff"/><rect x="867" fill="#d5c4ff"/><rect x="870" fill="#ffbbf7"/><rect x="873" fill="#ff99cd"/><rect x="876" fill="#ff7fad"/><rect x="879" fill="#ff6a93"/><rect x="882" fill="#ff597f"/><rect x="885" fill="#ff4b6d"/><rect x="888" fill="#ff405f"/><rect x="891" fill="#ff3653"/><rect x="894" fill="#ff2d49"/><rect x="897" fill="#ff263f"/><rect x="900" fill="#ff2037"/><rect x="903" fill="#ff1a30"/><rect x="906" fill="#ff152a"/><rect x="909" fill="#ff1024"/><rect x="912" fill="#ff0c1f"/><rect x="915" fill="#ff081b"/><rect x="918" fill="#ff0516"/><rect x="921" fill="#ff0213"/><rect x="924" fill="#ff000f"/><rect x="927" fill="#ff000c"/><rect x="930" fill="#ff0009"/><rect x="933" fill="#ff0006"/><rect x="936" fill="#ff0003"/><rect x="939" fill="#ff0001"/><rect x="942" fill="#ff0000"/><rect x="945" fill="#ff0000"/><rect x="948" fill="#ff0000"/><rect x="951" fill="#ff0000"/><rect x="954" fill="#ff0000"/></g><g transform="translate(0 202.09)"><rect x="813" fill="#00cdff"/><rect x="816" fill="#00ccff"/><rect x="819" fill="#00caff"/><rect x="822" fill="#00c9ff"/><rect x="825" fill="#00c7ff"/><rect x="828" fill="#00c6ff"/><rect x="831" fill="#00c4ff"/><rect x="834" fill="#00c3ff"/><rect x="837" fill="#00c1ff"/><rect x="840" fill="#00bfff"/><rect x="843" fill="#00bdff"/><rect x="846" fill="#00bbff"/><rect x="849" fill="#00b9ff"/><rect x="852" fill="#17b6ff"/><rect x="855" fill="#38b4ff"/><rect x="858" fill="#5bb1ff"/><rect x="861" fill="#80aeff"/><rect x="864" fill="#a9abff"/><rect x="867" fill="#d5a8ff"/><rect x="870" fill="#ffa1fa"/><rect x="873" fill="#ff83d1"/><rect x="876" fill="#ff6cb1"/><rect x="879" fill="#ff5a98"/><rect x="882" fill="#ff4b83"/><rect x="885" fill="#ff3f72"/><rect x="888" fill="#ff3564"/><rect x="891" fill="#ff2c58"/><rect x="894" fill="#ff244d"/><rect x="897" fill="#ff1d44"/><rect x="900" fill="#ff183c"/><rect x="903" fill="#ff1234"/><rect x="906" fill="#ff0e2e"/><rect x="909" fill="#ff0928"/><rect x="912" fill="#ff0623"/><rect x="915" fill="#ff021e"/><rect x="918" fill="#ff001a"/><rect x="921" fill="#ff0016"/><rect x="924" fill="#ff0012"/><rect x="927" fill="#ff000f"/><rect x="930" fill="#ff000c"/><rect x="933" fill="#ff0009"/><rect x="936" fill="#ff0006"/><rect x="939" fill="#ff0004"/><rect x="942" fill="#ff0001"/><rect x="945" fill="#ff0000"/><rect x="948" fill="#ff0000"/><rect x="951" fill="#ff0000"/><rect x="954" fill="#ff0000"/><rect x="957" fill="#ff0000"/></g><g transform="translate(0 205.09)"><rect x="813" fill="#00bdff"/><rect x="816" fill="#00bbff"/><rect x="819" fill="#00b9ff"/><rect x="822" fill="#00b8ff"/><rect x="825" fill="#00b6ff"/><rect x="828" fill="#00b4ff"/><rect x="831" fill="#00b2ff"/><rect x="834" fill="#00b0ff"/><rect x="837" fill="#00aeff"/><rect x="840" fill="#00abff"/><rect x="843" fill="#00a9ff"/><rect x="846" fill="#00a6ff"/><rect x="849" fill="#00a3ff"/><rect x="852" fill="#1ea1ff"/><rect x="855" fill="#3e9dff"/><rect x="858" fill="#609aff"/><rect x="861" fill="#8496ff"/><rect x="864" fill="#ab93ff"/><rect x="867" fill="#d58fff"/><rect x="870" fill="#ff89fc"/><rect x="873" fill="#ff6fd4"/><rect x="876" fill="#ff5bb5"/><rect x="879" fill="#ff4b9c"/><rect x="882" fill="#ff3e88"/><rect x="885" fill="#ff3377"/><rect x="888" fill="#ff2a68"/><rect x="891" fill="#ff225c"/><rect x="894" fill="#ff1b51"/><rect x="897" fill="#ff1548"/><rect x="900" fill="#ff1040"/><rect x="903" fill="#ff0b38"/><rect x="906" fill="#ff0732"/><rect x="909" fill="#ff032c"/><rect x="912" fill="#ff0027"/><rect x="915" fill="#ff0022"/><rect x="918" fill="#ff001d"/><rect x="921" fill="#ff0019"/><rect x="924" fill="#ff0016"/><rect x="927" fill="#ff0012"/><rect x="930" fill="#ff000f"/><rect x="933" fill="#ff000c"/><rect x="936" fill="#ff0009"/><rect x="939" fill="#ff0007"/><rect x="942" fill="#ff0004"/><rect x="945" fill="#ff0002"/><rect x="948" fill="#ff0000"/><rect x="951" fill="#ff0000"/><rect x="954" fill="#ff0000"/><rect x="957" fill="#ff0000"/></g><g transform="translate(0 208.09)"><rect x="813" fill="#00adff"/><rect x="816" fill="#00abff"/><rect x="819" fill="#00a9ff"/><rect x="822" fill="#00a7ff"/><rect x="825" fill="#00a5ff"/><rect x="828" fill="#00a3ff"/><rect x="831" fill="#00a1ff"/><rect x="834" fill="#009eff"/><rect x="837" fill="#009cff"/><rect x="840" fill="#0099ff"/><rect x="843" fill="#0096ff"/><rect x="846" fill="#0093ff"/><rect x="849" fill="#0890ff"/><rect x="852" fill="#258cff"/><rect x="855" fill="#4489ff"/><rect x="858" fill="#6485ff"/><rect x="861" fill="#8781ff"/><rect x="864" fill="#ad7cff"/><rect x="867" fill="#d578ff"/><rect x="870" fill="#ff72fe"/><rect x="873" fill="#ff5cd8"/><rect x="876" fill="#ff4bb9"/><rect x="879" fill="#ff3da0"/><rect x="882" fill="#ff318c"/><rect x="885" fill="#ff287b"/><rect x="888" fill="#ff206d"/><rect x="891" fill="#ff1860"/><rect x="894" fill="#ff1256"/><rect x="897" fill="#ff0d4c"/><rect x="900" fill="#ff0844"/><rect x="903" fill="#ff043c"/><rect x="906" fill="#ff0036"/><rect x="909" fill="#ff0030"/><rect x="912" fill="#ff002a"/><rect x="915" fill="#ff0025"/><rect x="918" fill="#ff0021"/><rect x="921" fill="#ff001d"/><rect x="924" fill="#ff0019"/><rect x="927" fill="#ff0015"/><rect x="930" fill="#ff0012"/><rect x="933" fill="#ff000f"/><rect x="936" fill="#ff000c"/><rect x="939" fill="#ff0009"/><rect x="942" fill="#ff0007"/><rect x="945" fill="#ff0005"/><rect x="948" fill="#ff0002"/><rect x="951" fill="#ff0000"/><rect x="954" fill="#ff0000"/><rect x="957" fill="#ff0000"/></g><g transform="translate(0 211.09)"><rect x="813" fill="#009fff"/><rect x="816" fill="#009dff"/><rect x="819" fill="#009aff"/><rect x="822" fill="#0098ff"/><rect x="825" fill="#0096ff"/><rect x="828" fill="#0093ff"/><rect x="831" fill="#0090ff"/><rect x="834" fill="#008eff"/><rect x="837" fill="#008bff"/><rect x="840" fill="#0088ff"/><rect x="843" fill="#0084ff"/><rect x="846" fill="#0081ff"/><rect x="849" fill="#0f7dff"/><rect x="852" fill="#2b7aff"/><rect x="855" fill="#4975ff"/><rect x="858" fill="#6971ff"/><rect x="861" fill="#8a6dff"/><rect x="864" fill="#ae68ff"/><rect x="867" fill="#d462ff"/><rect x="870" fill="#fd5dff"/><rect x="873" fill="#ff4adb"/><rect x="876" fill="#ff3bbd"/><rect x="879" fill="#ff2fa4"/><rect x="882" fill="#ff2590"/><rect x="885" fill="#ff1d7f"/><rect x="888" fill="#ff1671"/><rect x="891" fill="#ff0f64"/><rect x="894" fill="#ff0a5a"/><rect x="897" fill="#ff0550"/><rect x="900" fill="#ff0148"/><rect x="903" fill="#ff0040"/><rect x="906" fill="#ff0039"/><rect x="909" fill="#ff0033"/><rect x="912" fill="#ff002e"/><rect x="915" fill="#ff0029"/><rect x="918" fill="#ff0024"/><rect x="921" fill="#ff0020"/><rect x="924" fill="#ff001c"/><rect x="927" fill="#ff0018"/><rect x="930" fill="#ff0015"/><rect x="933" fill="#ff0012"/><rect x="936" fill="#ff000f"/><rect x="939" fill="#ff000c"/><rect x="942" fill="#ff000a"/><rect x="945" fill="#ff0007"/><rect x="948" fill="#ff0005"/><rect x="951" fill="#ff0003"/><rect x="954" fill="#ff0001"/><rect x="957" fill="#ff0000"/></g><g transform="translate(0 214.09)"><rect x="813" fill="#0091ff"/><rect x="816" fill="#008fff"/><rect x="819" fill="#008cff"/><rect x="822" fill="#008aff"/><rect x="825" fill="#0087ff"/><rect x="828" fill="#0084ff"/><rect x="831" fill="#0081ff"/><rect x="834" fill="#007eff"/><rect x="837" fill="#007bff"/><rect x="840" fill="#0078ff"/><rect x="843" fill="#0074ff"/><rect x="846" fill="#0070ff"/><rect x="849" fill="#166cff"/><rect x="852" fill="#3168ff"/><rect x="855" fill="#4e64ff"/><rect x="858" fill="#6d5fff"/><rect x="861" fill="#8d5aff"/><rect x="864" fill="#b055ff"/><rect x="867" fill="#d44fff"/><rect x="870" fill="#fc49ff"/><rect x="873" fill="#ff3add"/><rect x="876" fill="#ff2dc0"/><rect x="879" fill="#ff23a8"/><rect x="882" fill="#ff1a94"/><rect x="885" fill="#ff1283"/><rect x="888" fill="#ff0c75"/><rect x="891" fill="#ff0768"/><rect x="894" fill="#ff025d"/><rect x="897" fill="#ff0054"/><rect x="900" fill="#ff004b"/><rect x="903" fill="#ff0044"/><rect x="906" fill="#ff003d"/><rect x="909" fill="#ff0037"/><rect x="912" fill="#ff0031"/><rect x="915" fill="#ff002c"/><rect x="918" fill="#ff0027"/><rect x="921" fill="#ff0023"/><rect x="924" fill="#ff001f"/><rect x="927" fill="#ff001b"/><rect x="930" fill="#ff0018"/><rect x="933" fill="#ff0015"/><rect x="936" fill="#ff0012"/><rect x="939" fill="#ff000f"/><rect x="942" fill="#ff000c"/><rect x="945" fill="#ff000a"/><rect x="948" fill="#ff0007"/><rect x="951" fill="#ff0005"/></g><g transform="translate(0 217.09)"><rect x="816" fill="#0081ff"/><rect x="819" fill="#007fff"/><rect x="822" fill="#007cff"/><rect x="825" fill="#0079ff"/><rect x="828" fill="#0076ff"/><rect x="831" fill="#0073ff"/><rect x="834" fill="#0070ff"/><rect x="837" fill="#006cff"/><rect x="840" fill="#0068ff"/><rect x="843" fill="#0065ff"/><rect x="846" fill="#0361ff"/><rect x="849" fill="#1c5cff"/><rect x="852" fill="#3758ff"/><rect x="855" fill="#5353ff"/><rect x="858" fill="#704eff"/><rect x="861" fill="#9049ff"/><rect x="864" fill="#b143ff"/><rect x="867" fill="#d43dff"/><rect x="870" fill="#fa37ff"/><rect x="873" fill="#ff2ae0"/><rect x="876" fill="#ff1fc3"/><rect x="879" fill="#ff16ac"/><rect x="882" fill="#ff0f98"/><rect x="885" fill="#ff0887"/><rect x="888" fill="#ff0379"/><rect x="891" fill="#ff006c"/><rect x="894" fill="#ff0061"/><rect x="897" fill="#ff0057"/><rect x="900" fill="#ff004f"/><rect x="903" fill="#ff0047"/><rect x="906" fill="#ff0040"/><rect x="909" fill="#ff003a"/><rect x="912" fill="#ff0034"/><rect x="915" fill="#ff002f"/><rect x="918" fill="#ff002a"/><rect x="921" fill="#ff0026"/><rect x="924" fill="#ff0022"/><rect x="927" fill="#ff001e"/><rect x="930" fill="#ff001b"/><rect x="933" fill="#ff0017"/><rect x="936" fill="#ff0014"/><rect x="939" fill="#ff0011"/><rect x="942" fill="#ff000f"/><rect x="945" fill="#ff000c"/></g><g transform="translate(0 220.09)"><rect x="816" fill="#0075ff"/><rect x="819" fill="#0072ff"/><rect x="822" fill="#006fff"/><rect x="825" fill="#006cff"/><rect x="828" fill="#0069ff"/><rect x="831" fill="#0065ff"/><rect x="834" fill="#0062ff"/><rect x="837" fill="#005eff"/><rect x="840" fill="#005aff"/><rect x="843" fill="#0056ff"/><rect x="846" fill="#0952ff"/><rect x="849" fill="#224dff"/><rect x="852" fill="#3c49ff"/><rect x="855" fill="#5744ff"/><rect x="858" fill="#743fff"/><rect x="861" fill="#9239ff"/><rect x="864" fill="#b233ff"/><rect x="867" fill="#d42dff"/><rect x="870" fill="#f826ff"/><rect x="873" fill="#ff1ce3"/><rect x="876" fill="#ff13c6"/><rect x="879" fill="#ff0baf"/><rect x="882" fill="#ff049b"/><rect x="885" fill="#ff008b"/><rect x="888" fill="#ff007c"/><rect x="891" fill="#ff0070"/><rect x="894" fill="#ff0065"/><rect x="897" fill="#ff005b"/><rect x="900" fill="#ff0052"/><rect x="903" fill="#ff004b"/><rect x="906" fill="#ff0044"/><rect x="909" fill="#ff003d"/><rect x="912" fill="#ff0037"/><rect x="915" fill="#ff0032"/><rect x="918" fill="#ff002d"/><rect x="921" fill="#ff0029"/><rect x="924" fill="#ff0025"/><rect x="927" fill="#ff0021"/><rect x="930" fill="#ff001d"/><rect x="933" fill="#ff001a"/><rect x="936" fill="#ff0017"/><rect x="939" fill="#ff0014"/></g><g transform="translate(0 223.09)"><rect x="816" fill="#0069ff"/><rect x="819" fill="#0066ff"/><rect x="822" fill="#0063ff"/><rect x="825" fill="#005fff"/><rect x="828" fill="#005cff"/><rect x="831" fill="#0058ff"/><rect x="834" fill="#0055ff"/><rect x="837" fill="#0051ff"/><rect x="840" fill="#004dff"/><rect x="843" fill="#0049ff"/><rect x="846" fill="#1044ff"/><rect x="849" fill="#273fff"/><rect x="852" fill="#413bff"/><rect x="855" fill="#5b35ff"/><rect x="858" fill="#7730ff"/><rect x="861" fill="#942aff"/><rect x="864" fill="#b324ff"/><rect x="867" fill="#d41eff"/><rect x="870" fill="#f717ff"/><rect x="873" fill="#ff0ee5"/><rect x="876" fill="#ff06c9"/><rect x="879" fill="#ff00b2"/><rect x="882" fill="#ff009f"/><rect x="885" fill="#ff008e"/><rect x="888" fill="#ff0080"/><rect x="891" fill="#ff0073"/><rect x="894" fill="#ff0068"/><rect x="897" fill="#ff005e"/><rect x="900" fill="#ff0056"/><rect x="903" fill="#ff004e"/><rect x="906" fill="#ff0047"/><rect x="909" fill="#ff0040"/><rect x="912" fill="#ff003b"/><rect x="915" fill="#ff0035"/><rect x="918" fill="#ff0030"/><rect x="921" fill="#ff002c"/><rect x="924" fill="#ff0028"/><rect x="927" fill="#ff0024"/><rect x="930" fill="#ff0020"/></g><g transform="translate(0 226.09)"><rect x="816" fill="#005dff"/><rect x="819" fill="#005aff"/><rect x="822" fill="#0057ff"/><rect x="825" fill="#0054ff"/><rect x="828" fill="#0050ff"/><rect x="831" fill="#004cff"/><rect x="834" fill="#0048ff"/><rect x="837" fill="#0044ff"/><rect x="840" fill="#0040ff"/><rect x="843" fill="#003cff"/><rect x="846" fill="#1537ff"/><rect x="849" fill="#2d32ff"/><rect x="852" fill="#452dff"/><rect x="855" fill="#5f28ff"/><rect x="858" fill="#7a22ff"/><rect x="861" fill="#961cff"/><rect x="864" fill="#b416ff"/><rect x="867" fill="#d410ff"/><rect x="870" fill="#f609ff"/><rect x="873" fill="#ff01e7"/><rect x="876" fill="#ff00cc"/><rect x="879" fill="#ff00b5"/><rect x="882" fill="#ff00a2"/><rect x="885" fill="#ff0091"/><rect x="888" fill="#ff0083"/><rect x="891" fill="#ff0077"/><rect x="894" fill="#ff006c"/><rect x="897" fill="#ff0062"/><rect x="900" fill="#ff0059"/><rect x="903" fill="#ff0051"/><rect x="906" fill="#ff004a"/><rect x="909" fill="#ff0044"/><rect x="912" fill="#ff003e"/><rect x="915" fill="#ff0038"/><rect x="918" fill="#ff0033"/><rect x="921" fill="#ff002f"/><rect x="924" fill="#ff002a"/></g><g transform="translate(0 229.09)"><rect x="819" fill="#004fff"/><rect x="822" fill="#004cff"/><rect x="825" fill="#0048ff"/><rect x="828" fill="#0045ff"/><rect x="831" fill="#0041ff"/><rect x="834" fill="#003dff"/><rect x="837" fill="#0039ff"/><rect x="840" fill="#0034ff"/><rect x="843" fill="#0530ff"/><rect x="846" fill="#1b2bff"/><rect x="849" fill="#3126ff"/><rect x="852" fill="#4921ff"/><rect x="855" fill="#621bff"/><rect x="858" fill="#7d15ff"/><rect x="861" fill="#980fff"/><rect x="864" fill="#b509ff"/><rect x="867" fill="#d402ff"/><rect x="870" fill="#f400ff"/><rect x="873" fill="#ff00e9"/><rect x="876" fill="#ff00cf"/><rect x="879" fill="#ff00b8"/><rect x="882" fill="#ff00a5"/><rect x="885" fill="#ff0095"/><rect x="888" fill="#ff0086"/><rect x="891" fill="#ff007a"/><rect x="894" fill="#ff006f"/><rect x="897" fill="#ff0065"/><rect x="900" fill="#ff005c"/><rect x="903" fill="#ff0054"/><rect x="906" fill="#ff004d"/><rect x="909" fill="#ff0047"/><rect x="912" fill="#ff0041"/><rect x="915" fill="#ff003b"/><rect x="918" fill="#ff0036"/></g><g transform="translate(0 232.09)"><rect x="819" fill="#0045ff"/><rect x="822" fill="#0041ff"/><rect x="825" fill="#003eff"/><rect x="828" fill="#003aff"/><rect x="831" fill="#0036ff"/><rect x="834" fill="#0032ff"/><rect x="837" fill="#002dff"/><rect x="840" fill="#0029ff"/><rect x="843" fill="#0b24ff"/><rect x="846" fill="#201fff"/><rect x="849" fill="#361aff"/><rect x="852" fill="#4d15ff"/><rect x="855" fill="#660fff"/><rect x="858" fill="#7f09ff"/><rect x="861" fill="#9a03ff"/><rect x="864" fill="#b600ff"/><rect x="867" fill="#d400ff"/><rect x="870" fill="#f300ff"/><rect x="873" fill="#ff00eb"/><rect x="876" fill="#ff00d1"/><rect x="879" fill="#ff00bb"/><rect x="882" fill="#ff00a8"/><rect x="885" fill="#ff0098"/><rect x="888" fill="#ff008a"/><rect x="891" fill="#ff007d"/><rect x="894" fill="#ff0072"/><rect x="897" fill="#ff0068"/><rect x="900" fill="#ff005f"/><rect x="903" fill="#ff0057"/><rect x="906" fill="#ff0050"/><rect x="909" fill="#ff004a"/><rect x="912" fill="#ff0044"/></g><g transform="translate(0 235.09)"><rect x="822" fill="#0037ff"/><rect x="825" fill="#0033ff"/><rect x="828" fill="#0030ff"/><rect x="831" fill="#002bff"/><rect x="834" fill="#0027ff"/><rect x="837" fill="#0023ff"/><rect x="840" fill="#001eff"/><rect x="843" fill="#1019ff"/><rect x="846" fill="#2514ff"/><rect x="849" fill="#3a0fff"/><rect x="852" fill="#510aff"/><rect x="855" fill="#6904ff"/><rect x="858" fill="#8200ff"/><rect x="861" fill="#9c00ff"/><rect x="864" fill="#b700ff"/><rect x="867" fill="#d400ff"/><rect x="870" fill="#f200ff"/><rect x="873" fill="#ff00ed"/><rect x="876" fill="#ff00d3"/><rect x="879" fill="#ff00be"/><rect x="882" fill="#ff00ab"/><rect x="885" fill="#ff009b"/><rect x="888" fill="#ff008d"/><rect x="891" fill="#ff0080"/><rect x="894" fill="#ff0075"/><rect x="897" fill="#ff006b"/><rect x="900" fill="#ff0062"/><rect x="903" fill="#ff005a"/><rect x="906" fill="#ff0053"/></g><g transform="translate(0 238.09)"><rect x="822" fill="#002eff"/><rect x="825" fill="#002aff"/><rect x="828" fill="#0026ff"/><rect x="831" fill="#0022ff"/><rect x="834" fill="#001dff"/><rect x="837" fill="#0019ff"/><rect x="840" fill="#0114ff"/><rect x="843" fill="#150fff"/><rect x="846" fill="#290aff"/><rect x="849" fill="#3e05ff"/><rect x="852" fill="#5500ff"/><rect x="855" fill="#6c00ff"/><rect x="858" fill="#8400ff"/><rect x="861" fill="#9d00ff"/><rect x="864" fill="#b800ff"/><rect x="867" fill="#d400ff"/><rect x="870" fill="#f100ff"/><rect x="873" fill="#ff00ef"/><rect x="876" fill="#ff00d6"/><rect x="879" fill="#ff00c0"/><rect x="882" fill="#ff00ae"/><rect x="885" fill="#ff009e"/><rect x="888" fill="#ff0090"/><rect x="891" fill="#ff0083"/><rect x="894" fill="#ff0078"/><rect x="897" fill="#ff006e"/><rect x="900" fill="#ff0065"/></g><g transform="translate(0 241.09)"><rect x="822" fill="#0024ff"/><rect x="825" fill="#0020ff"/><rect x="828" fill="#001cff"/><rect x="831" fill="#0018ff"/><rect x="834" fill="#0014ff"/><rect x="837" fill="#000fff"/><rect x="840" fill="#060aff"/><rect x="843" fill="#1a05ff"/><rect x="846" fill="#2e00ff"/><rect x="849" fill="#4200ff"/><rect x="852" fill="#5800ff"/><rect x="855" fill="#6f00ff"/><rect x="858" fill="#8600ff"/><rect x="861" fill="#9f00ff"/><rect x="864" fill="#b900ff"/><rect x="867" fill="#d400ff"/><rect x="870" fill="#f000ff"/><rect x="873" fill="#ff00f1"/><rect x="876" fill="#ff00d8"/><rect x="879" fill="#ff00c3"/><rect x="882" fill="#ff00b0"/><rect x="885" fill="#ff00a0"/><rect x="888" fill="#ff0092"/><rect x="891" fill="#ff0086"/></g><g transform="translate(0 244.09)"><rect x="825" fill="#0018ff"/><rect x="828" fill="#0013ff"/><rect x="831" fill="#000fff"/><rect x="834" fill="#000bff"/><rect x="837" fill="#0006ff"/><rect x="840" fill="#0b01ff"/><rect x="843" fill="#1e00ff"/><rect x="846" fill="#3200ff"/><rect x="849" fill="#4600ff"/><rect x="852" fill="#5b00ff"/><rect x="855" fill="#7100ff"/><rect x="858" fill="#8800ff"/><rect x="861" fill="#a000ff"/><rect x="864" fill="#b900ff"/><rect x="867" fill="#d400ff"/><rect x="870" fill="#ef00ff"/><rect x="873" fill="#ff00f3"/><rect x="876" fill="#ff00da"/><rect x="879" fill="#ff00c5"/><rect x="882" fill="#ff00b3"/><rect x="885" fill="#ff00a3"/></g><g transform="translate(0 247.09)"><rect x="825" fill="#000fff"/><rect x="828" fill="#000bff"/><rect x="831" fill="#0006ff"/><rect x="834" fill="#0002ff"/><rect x="837" fill="#0000ff"/><rect x="840" fill="#1000ff"/><rect x="843" fill="#2200ff"/><rect x="846" fill="#3600ff"/><rect x="849" fill="#4a00ff"/><rect x="852" fill="#5e00ff"/><rect x="855" fill="#7400ff"/><rect x="858" fill="#8a00ff"/><rect x="861" fill="#a200ff"/><rect x="864" fill="#ba00ff"/><rect x="867" fill="#d400ff"/><rect x="870" fill="#ee00ff"/><rect x="873" fill="#ff00f4"/><rect x="876" fill="#ff00dc"/><rect x="879" fill="#ff00c7"/></g><g transform="translate(0 250.09)"><rect x="828" fill="#0003ff"/><rect x="831" fill="#0000ff"/><rect x="834" fill="#0000ff"/><rect x="837" fill="#0300ff"/><rect x="840" fill="#1500ff"/><rect x="843" fill="#2700ff"/><rect x="846" fill="#3900ff"/><rect x="849" fill="#4d00ff"/><rect x="852" fill="#6100ff"/><rect x="855" fill="#7600ff"/><rect x="858" fill="#8c00ff"/><rect x="861" fill="#a300ff"/><rect x="864" fill="#bb00ff"/><rect x="867" fill="#d400ff"/><rect x="870" fill="#ee00ff"/><rect x="873" fill="#ff00f6"/></g><g transform="translate(0 253.09)"><rect x="828" fill="#0000ff"/><rect x="831" fill="#0000ff"/><rect x="834" fill="#0000ff"/><rect x="837" fill="#0800ff"/><rect x="840" fill="#1900ff"/><rect x="843" fill="#2b00ff"/><rect x="846" fill="#3d00ff"/><rect x="849" fill="#5000ff"/><rect x="852" fill="#6400ff"/><rect x="855" fill="#7800ff"/><rect x="858" fill="#8e00ff"/><rect x="861" fill="#a400ff"/><rect x="864" fill="#bb00ff"/><rect x="867" fill="#d400ff"/></g><g transform="translate(0 256.09)"><rect x="831" fill="#0000ff"/><rect x="834" fill="#0000ff"/><rect x="837" fill="#0c00ff"/><rect x="840" fill="#1d00ff"/><rect x="843" fill="#2e00ff"/><rect x="846" fill="#4000ff"/><rect x="849" fill="#5300ff"/><rect x="852" fill="#6600ff"/><rect x="855" fill="#7b00ff"/><rect x="858" fill="#9000ff"/><rect x="861" fill="#a500ff"/></g><g transform="translate(0 259.09)"><rect x="834" fill="#0000ff"/><rect x="837" fill="#0e00ff"/><rect x="840" fill="#1f00ff"/><rect x="843" fill="#3000ff"/><rect x="846" fill="#4200ff"/><rect x="849" fill="#5400ff"/><rect x="852" fill="#6800ff"/></g></g></g><path d="M829.5 84.4V258.9" stroke="#000" stroke-width="1" stroke-dasharray="1.560 1.565" stroke-opacity="0.42"/><path d="M848.5 84.4V258.9" stroke="#000" stroke-width="1" stroke-dasharray="1.560 1.565" stroke-opacity="0.6"/><path d="M868.5 84.4V258.9" stroke="#000" stroke-width="1" stroke-dasharray="1.560 1.565" stroke-opacity="0.9"/><path d="M887.5 84.4V258.9" stroke="#000" stroke-width="1" stroke-dasharray="1.560 1.565" stroke-opacity="0.36"/><path d="M907.5 84.4V258.9" stroke="#000" stroke-width="1" stroke-dasharray="1.560 1.565" stroke-opacity="0.1"/><path d="M926.5 84.4V258.9" stroke="#000" stroke-width="1" stroke-dasharray="1.560 1.565" stroke-opacity="0.3"/><path d="M946.5 84.4V258.9" stroke="#000" stroke-width="1" stroke-dasharray="1.560 1.565" stroke-opacity="0.85"/><path d="M810 239.5H965.5" stroke="#000" stroke-width="1" stroke-dasharray="1.560 1.565" stroke-opacity="0.5"/><path d="M810 220.5H965.5" stroke="#000" stroke-width="1" stroke-dasharray="1.560 1.565" stroke-opacity="0.9"/><path d="M810 200.5H965.5" stroke="#000" stroke-width="1" stroke-dasharray="1.560 1.565" stroke-opacity="0.65"/><path d="M810 181.5H965.5" stroke="#000" stroke-width="1" stroke-dasharray="1.560 1.565" stroke-opacity="0.42"/><path d="M810 161.5H965.5" stroke="#000" stroke-width="1" stroke-dasharray="1.560 1.565" stroke-opacity="0.12"/><path d="M810 142.5H965.5" stroke="#000" stroke-width="1" stroke-dasharray="1.560 1.565" stroke-opacity="0.4"/><path d="M810 123.5H965.5" stroke="#000" stroke-width="1" stroke-dasharray="1.560 1.565" stroke-opacity="0.7"/><path d="M810 103.5H965.5" stroke="#000" stroke-width="1" stroke-dasharray="1.560 1.565" stroke-opacity="0.9"/><rect x="810" y="84.4" width="155.5" height="174.5" fill="none" stroke="#555" stroke-width=".6"/><path d="M965.5 84.4V258.9" stroke="#111" stroke-width=".8"/><path d="M856.63 213.49L857.62 211.98L859.08 209.98L861.32 206.94L864.56 202.98L867.38 199.8L870.94 196.14L874.61 192.78L877.08 190.73L883.96 185.84L888.78 183.15L894.92 180.55L902.72 178.69L912.38 178.77L923.85 182.68L931.48 187.55L936.89 192.12" stroke="#111" stroke-width=".7" fill="none"/><path d="M866.23 190.03h7M869.73 186.53v7" stroke="#601030" stroke-width=".9" fill="none"/><circle cx="869.73" cy="190.03" r="1.300" fill="none" stroke="#601030" stroke-width=".5"/></svg>
<span id="t115" class="t" style="top:520.24px;font-size:10.6px;line-height:12.72px;color:#222;left:1619.4px;transform:translateX(-50%) scaleX(0.8959);">0.0</span>
<span id="t116" class="t" style="top:520.24px;font-size:10.6px;line-height:12.72px;color:#222;left:1658.28px;transform:translateX(-50%) scaleX(0.8959);">0.1</span>
<span id="t117" class="t" style="top:520.24px;font-size:10.6px;line-height:12.72px;color:#222;left:1697.15px;transform:translateX(-50%) scaleX(0.8959);">0.2</span>
<span id="t118" class="t" style="top:520.24px;font-size:10.6px;line-height:12.72px;color:#222;left:1736.03px;transform:translateX(-50%) scaleX(0.8959);">0.3</span>
<span id="t119" class="t" style="top:520.24px;font-size:10.6px;line-height:12.72px;color:#222;left:1774.9px;transform:translateX(-50%) scaleX(0.8959);">0.4</span>
<span id="t120" class="t" style="top:520.24px;font-size:10.6px;line-height:12.72px;color:#222;left:1813.78px;transform:translateX(-50%) scaleX(0.8959);">0.5</span>
<span id="t121" class="t" style="top:520.24px;font-size:10.6px;line-height:12.72px;color:#222;left:1852.65px;transform:translateX(-50%) scaleX(0.8959);">0.6</span>
<span id="t122" class="t" style="top:520.24px;font-size:10.6px;line-height:12.72px;color:#222;left:1891.53px;transform:translateX(-50%) scaleX(0.8959);">0.7</span>
<span id="t123" class="t" style="top:520.24px;font-size:10.6px;line-height:12.72px;color:#222;left:1929px;transform:translateX(-50%) scaleX(0.8959);">0.8</span>
<span id="t124" class="t" style="top:519.28px;font-size:11.2px;line-height:13.44px;color:#222;left:1939.2px;transform:translateX(-50%);">x</span>
<span id="t125" class="t" style="top:473.46px;font-size:10.6px;line-height:12.72px;color:#222;left:1618px;transform-origin:100% 50%;transform:translateX(-100%) scaleX(0.8959);">0.1</span>
<span id="t126" class="t" style="top:434.68px;font-size:10.6px;line-height:12.72px;color:#222;left:1618px;transform-origin:100% 50%;transform:translateX(-100%) scaleX(0.8959);">0.2</span>
<span id="t127" class="t" style="top:395.91px;font-size:10.6px;line-height:12.72px;color:#222;left:1618px;transform-origin:100% 50%;transform:translateX(-100%) scaleX(0.8959);">0.3</span>
<span id="t128" class="t" style="top:357.13px;font-size:10.6px;line-height:12.72px;color:#222;left:1618px;transform-origin:100% 50%;transform:translateX(-100%) scaleX(0.8959);">0.4</span>
<span id="t129" class="t" style="top:318.35px;font-size:10.6px;line-height:12.72px;color:#222;left:1618px;transform-origin:100% 50%;transform:translateX(-100%) scaleX(0.8959);">0.5</span>
<span id="t130" class="t" style="top:279.57px;font-size:10.6px;line-height:12.72px;color:#222;left:1618px;transform-origin:100% 50%;transform:translateX(-100%) scaleX(0.8959);">0.6</span>
<span id="t131" class="t" style="top:240.8px;font-size:10.6px;line-height:12.72px;color:#222;left:1618px;transform-origin:100% 50%;transform:translateX(-100%) scaleX(0.8959);">0.7</span>
<span id="t132" class="t" style="top:202.02px;font-size:10.6px;line-height:12.72px;color:#222;left:1618px;transform-origin:100% 50%;transform:translateX(-100%) scaleX(0.8959);">0.8</span>
<span id="t133" class="t" style="top:163.24px;font-size:10.6px;line-height:12.72px;color:#222;left:1618px;transform-origin:100% 50%;transform:translateX(-100%) scaleX(0.8959);">0.9</span>
<span id="t134" class="t" style="top:152.08px;font-size:11.2px;line-height:13.44px;color:#222;left:1613.2px;transform:translateX(-50%);">y</span>
<div style="left:1586.6px;top:579.2px;width:379.4px;height:465.2px;background:#f3f3f3;border:1.6px solid #e0e0e0;border-top-color:#bcbcbc;border-right-color:#bdbdbd;border-bottom-color:#bdbdbd"></div>
<div style="left:1587.8px;top:603.6px;width:377px;height:1.8px;background:#fdfdfd"></div>
<div style="left:1592px;top:582.6px;width:56.4px;height:22.6px;background:#fdfdfd;border:1.8px solid #bcbcbc;border-bottom:none;border-radius:2.4px 2.4px 0 0"></div>
<div style="left:1722.6px;top:585px;width:1.2px;height:17px;background:#cfcfcf"></div>
<svg style="left:1946.4px;top:587px" width="12" height="12" viewBox="0 0 6 6" >
<path d="M1 1.100l4 3.900M5 1.100l-4 3.900" stroke="#111" stroke-width="1.250" fill="none"/></svg>
<svg style="left:1596px;top:585.2px" width="16" height="16" viewBox="0 0 8 8" >
<path d="M.6 5.400c1.400-3.600 4.200-3.600 5.200 0M3.200 2.700l1.400-1.800 1 2.600" stroke="#5a8ae0" stroke-width=".9" fill="none"/></svg>
<span id="t135" class="t" style="top:586.68px;font-size:11.2px;line-height:13.44px;color:#000;left:1614px;transform-origin:0 50%;transform:scaleX(0.8740);">SDCM</span>
<svg style="left:1653.2px;top:585.6px" width="16" height="16" viewBox="0 0 8 8" >
<rect x="1.600" y="1.600" width="4.800" height="4.800" fill="#9ec2ee" stroke="#3a6ac8" stroke-width=".5"/><path d="M.4.400l1.800 1.800M7.600.400l-1.800 1.800M.4 7.600l1.800-1.800M7.600 7.600l-1.800-1.800" stroke="#222" stroke-width=".8"/></svg>
<span id="t136" class="t" style="top:586.68px;font-size:11.2px;line-height:13.44px;color:#000;left:1672.4px;transform-origin:0 50%;transform:scaleX(0.9008);">CHROMA</span>
<span id="t137" class="t" style="top:621.44px;font-size:11.6px;line-height:13.92px;color:#000;left:1598.8px;letter-spacing:-0.21px;">Select:</span>
<div style="left:1642.6px;top:617.2px;width:130px;height:21px;background:#e3e3e3;border:1px solid #adadad"></div>
<span id="t138" class="t" style="top:621.24px;font-size:11.6px;line-height:13.92px;color:#000;left:1646.8px;letter-spacing:-0.26px;">Auto</span>
<svg style="left:1756.8px;top:623.2px" width="12" height="10" viewBox="0 0 6 5" >
<path d="M.8 1.300l2.100 2.100 2.100-2.100" stroke="#333" stroke-width=".7" fill="none"/></svg>
<div style="left:1596.4px;top:648.6px;width:358.2px;height:384px;background:#3399ff;border:1.4px solid #8c8c8c;border-right-color:#c4c0bc;border-bottom-color:#c4c0bc"></div>
<svg style="left:1597.8px;top:650px" width="355.4" height="381.2" viewBox="0 0 177.7 190.6" >
<path d="M33 4.8V184.16M61.1 4.8V184.16M89.2 4.8V184.16M117.3 4.8V184.16M145.4 4.8V184.16M173.5 4.8V184.16M4.9 4.8H173.5M4.9 27.22H173.5M4.9 49.64H173.5M4.9 72.06H173.5M4.9 94.48H173.5M4.9 116.9H173.5M4.9 139.32H173.5M4.9 161.74H173.5" stroke="#fff" stroke-opacity=".24" stroke-width=".7" fill="none"/><path d="M33 4.8V184.16" stroke="#fff" stroke-opacity=".36" stroke-width=".8" stroke-dasharray="4 14.42 4 0" fill="none"/><path d="M61.1 4.8V184.16" stroke="#fff" stroke-opacity=".36" stroke-width=".8" stroke-dasharray="4 14.42 4 0" fill="none"/><path d="M89.2 4.8V184.16" stroke="#fff" stroke-opacity=".36" stroke-width=".8" stroke-dasharray="4 14.42 4 0" fill="none"/><path d="M117.3 4.8V184.16" stroke="#fff" stroke-opacity=".36" stroke-width=".8" stroke-dasharray="4 14.42 4 0" fill="none"/><path d="M145.4 4.8V184.16" stroke="#fff" stroke-opacity=".36" stroke-width=".8" stroke-dasharray="4 14.42 4 0" fill="none"/><path d="M173.5 4.8V184.16" stroke="#fff" stroke-opacity=".36" stroke-width=".8" stroke-dasharray="4 14.42 4 0" fill="none"/><path d="M4.9 4.8H173.5" stroke="#fff" stroke-opacity=".30" stroke-width=".8" stroke-dasharray="4.500 19.1 4.500 0" fill="none"/><path d="M4.9 27.22H173.5" stroke="#fff" stroke-opacity=".30" stroke-width=".8" stroke-dasharray="4.500 19.1 4.500 0" fill="none"/><path d="M4.9 49.64H173.5" stroke="#fff" stroke-opacity=".30" stroke-width=".8" stroke-dasharray="4.500 19.1 4.500 0" fill="none"/><path d="M4.9 72.06H173.5" stroke="#fff" stroke-opacity=".30" stroke-width=".8" stroke-dasharray="4.500 19.1 4.500 0" fill="none"/><path d="M4.9 94.48H173.5" stroke="#fff" stroke-opacity=".30" stroke-width=".8" stroke-dasharray="4.500 19.1 4.500 0" fill="none"/><path d="M4.9 116.9H173.5" stroke="#fff" stroke-opacity=".30" stroke-width=".8" stroke-dasharray="4.500 19.1 4.500 0" fill="none"/><path d="M4.9 139.32H173.5" stroke="#fff" stroke-opacity=".30" stroke-width=".8" stroke-dasharray="4.500 19.1 4.500 0" fill="none"/><path d="M4.9 161.74H173.5" stroke="#fff" stroke-opacity=".30" stroke-width=".8" stroke-dasharray="4.500 19.1 4.500 0" fill="none"/><path d="M4.9 4.8V184.16H173.5" stroke="#fff" stroke-opacity=".8" stroke-width=".8" fill="none"/><g transform="translate(83.1 107.5) rotate(-49.500)"><ellipse rx="64.400" ry="31" fill="none" stroke="#22e07c" stroke-width=".7" stroke-dasharray=".9 1.100"/><ellipse rx="53.800" ry="25.900" fill="none" stroke="#22e07c" stroke-width=".85"/></g><circle cx="83.1" cy="107.5" r="1.800" fill="#dcffdc"/><path d="M13.8 66h7M17.3 62.5v7" stroke="#e82030" stroke-width="1" fill="none"/></svg>
<span id="t139" class="t b" style="top:663.36px;font-size:14.4px;line-height:17.28px;color:#e81c2c;left:1620px;transform-origin:0 50%;transform:scaleX(0.9599);">SDCM: 15.6</span>
<span id="t140" class="t b" style="top:1001.84px;font-size:14.6px;line-height:17.52px;color:#000;left:1713.6px;transform-origin:0 50%;transform:scaleX(0.9830);">x=0.319 y=0.347 6100K/YANKON</span>
</div></body></html>
